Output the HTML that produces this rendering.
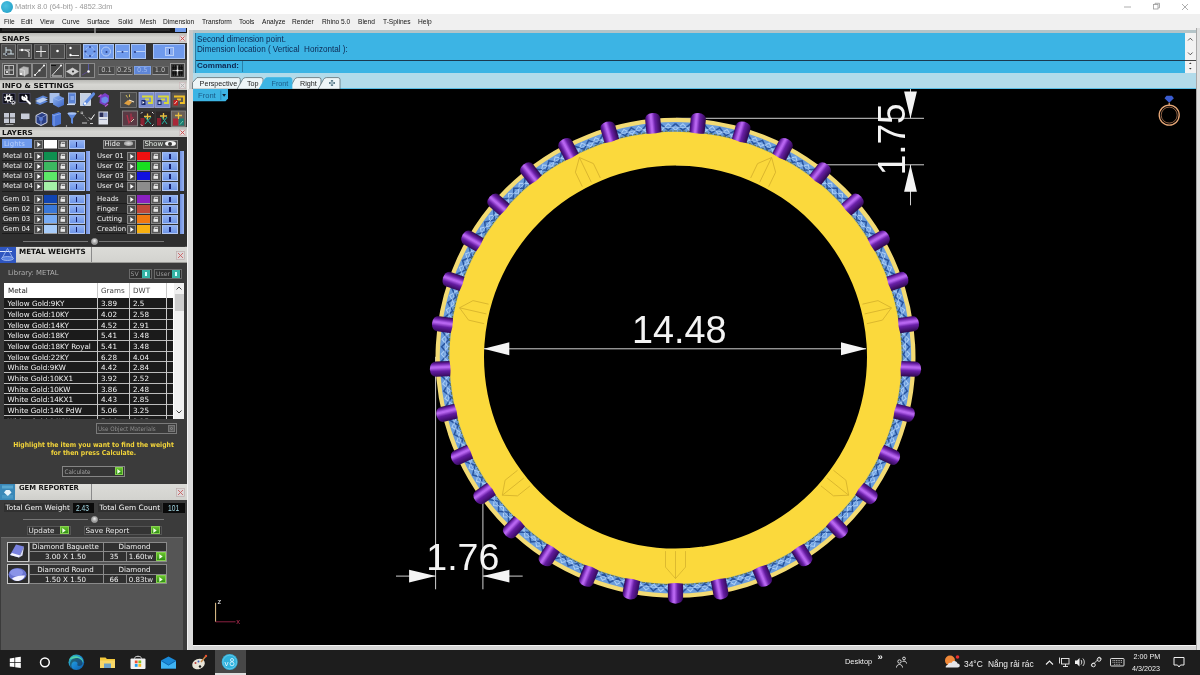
<!DOCTYPE html><html><head><meta charset="utf-8"><title>Matrix 8.0 (64-bit) - 4852.3dm</title><style>
*{box-sizing:border-box;margin:0;padding:0}
html,body{width:1200px;height:675px;overflow:hidden;background:#000}
body{font-family:"Liberation Sans",sans-serif;position:relative}
.a{position:absolute}
.t{position:absolute;white-space:nowrap;line-height:1}
.dv{font-family:"DejaVu Sans","Liberation Sans",sans-serif}
.dc{font-family:"DejaVu Sans Condensed","DejaVu Sans","Liberation Sans",sans-serif}
.hdr{position:absolute;left:0;width:187px;background:linear-gradient(#b9b9b5,#d6d6d2 45%,#cfcfcb);}
  .hdr b{position:absolute;left:2.2px;top:2.6px;transform:scaleX(1.06);transform-origin:0 0;font:bold 6.9px "DejaVu Sans","Liberation Sans",sans-serif;color:#111;white-space:nowrap;line-height:1;letter-spacing:0px}
.x{position:absolute;width:9px;height:8px;border:1px solid #c9a0a0;background:#ddd;}
.sb{position:absolute;background:#4b4b4b;border:1px solid #7c7c7c;border-top-color:#686868;border-left-color:#686868}
.sbb{position:absolute;background:#6f9aec;border:1px solid #a9c4f4;}
</style></head><body><div id="root" style="position:absolute;left:0;top:0;width:1200px;height:675px;will-change:transform">
<div class="a" style="left:0px;top:0px;width:1200px;height:14px;background:#ffffff;"></div>
<div class="a" style="left:0px;top:14px;width:1200px;height:15.5px;background:#f0f0f0;"></div>
<div class="a" style="left:1px;top:1px;width:12px;height:12px;border-radius:50%;background:radial-gradient(circle at 40% 40%,#4cc0e0,#1d9cc4)"></div>
<div class="t" style="left:15px;top:3.3px;font-size:7.4px;color:#9a9a9a;">Matrix 8.0 (64-bit) - 4852.3dm</div>
<div class="t" style="left:4px;top:17.6px;font-size:7.6px;color:#111;transform:scaleX(.87);transform-origin:0 0">File</div>
<div class="t" style="left:21px;top:17.6px;font-size:7.6px;color:#111;transform:scaleX(.87);transform-origin:0 0">Edit</div>
<div class="t" style="left:40px;top:17.6px;font-size:7.6px;color:#111;transform:scaleX(.87);transform-origin:0 0">View</div>
<div class="t" style="left:62px;top:17.6px;font-size:7.6px;color:#111;transform:scaleX(.87);transform-origin:0 0">Curve</div>
<div class="t" style="left:87px;top:17.6px;font-size:7.6px;color:#111;transform:scaleX(.87);transform-origin:0 0">Surface</div>
<div class="t" style="left:118px;top:17.6px;font-size:7.6px;color:#111;transform:scaleX(.87);transform-origin:0 0">Solid</div>
<div class="t" style="left:140px;top:17.6px;font-size:7.6px;color:#111;transform:scaleX(.87);transform-origin:0 0">Mesh</div>
<div class="t" style="left:163px;top:17.6px;font-size:7.6px;color:#111;transform:scaleX(.87);transform-origin:0 0">Dimension</div>
<div class="t" style="left:202px;top:17.6px;font-size:7.6px;color:#111;transform:scaleX(.87);transform-origin:0 0">Transform</div>
<div class="t" style="left:239px;top:17.6px;font-size:7.6px;color:#111;transform:scaleX(.87);transform-origin:0 0">Tools</div>
<div class="t" style="left:262px;top:17.6px;font-size:7.6px;color:#111;transform:scaleX(.87);transform-origin:0 0">Analyze</div>
<div class="t" style="left:292px;top:17.6px;font-size:7.6px;color:#111;transform:scaleX(.87);transform-origin:0 0">Render</div>
<div class="t" style="left:322px;top:17.6px;font-size:7.6px;color:#111;transform:scaleX(.87);transform-origin:0 0">Rhino 5.0</div>
<div class="t" style="left:358px;top:17.6px;font-size:7.6px;color:#111;transform:scaleX(.87);transform-origin:0 0">Blend</div>
<div class="t" style="left:383px;top:17.6px;font-size:7.6px;color:#111;transform:scaleX(.87);transform-origin:0 0">T-Splines</div>
<div class="t" style="left:418px;top:17.6px;font-size:7.6px;color:#111;transform:scaleX(.87);transform-origin:0 0">Help</div>
<svg class="a" style="left:1110px;top:0" width="90" height="14" viewBox="0 0 90 14"><g stroke="#999" stroke-width="0.8" fill="none"><path d="M14 7h7"/><rect x="43.5" y="4.5" width="4.5" height="4.5"/><path d="M45 4.5v-1.2h4.5v4.5h-1.3"/><path d="M72 4l6 6M78 4l-6 6"/></g></svg>
<div class="a" style="left:0px;top:28px;width:187px;height:622px;background:#3b3b3b;"></div>
<div class="a" style="left:187px;top:28px;width:6px;height:622px;background:#c8caca;"></div>
<div class="a" style="left:187.3px;top:28px;width:2.2px;height:622px;background:#f2f2f2;"></div>
<div class="a" style="left:185px;top:28px;width:2px;height:622px;background:#555;"></div>
<div class="a" style="left:0px;top:28px;width:187px;height:5px;background:#151515;"></div>
<div class="a" style="left:2px;top:28px;width:92px;height:3px;background:#2a2a2a;"></div>
<div class="a" style="left:96px;top:28px;width:74px;height:3px;background:#2a2a2a;"></div>
<div class="a" style="left:175px;top:28px;width:10.5px;height:4px;background:#6f9aec;"></div>
<div class="a" style="left:94px;top:28px;width:2px;height:5px;background:#777;"></div>
<div class="hdr" style="top:33px;height:10px"><b>SNAPS</b></div>
<svg class="a" style="left:179px;top:34.8px" width="7" height="7" viewBox="0 0 7 7"><rect x="0.300" y="0.300" width="6.400" height="6.400" fill="#e2dede" stroke="#c8b4b4" stroke-width="0.600"/><path d="M1.500 1.500l4 4M5.500 1.500l-4 4" stroke="#d04040" stroke-width="0.900" /></svg>
<div class="a" style="left:0px;top:43px;width:187px;height:17px;background:#333;"></div>
<div class="a" style="left:0px;top:60px;width:187px;height:20px;background:#5a5a5a;"></div>
<div class="sb" style="left:1px;top:44px;width:15px;height:15px"></div>
<div class="sb" style="left:17px;top:44px;width:15px;height:15px"></div>
<div class="sb" style="left:33.5px;top:44px;width:15px;height:15px"></div>
<div class="sb" style="left:50px;top:44px;width:15px;height:15px"></div>
<div class="sb" style="left:66px;top:44px;width:15px;height:15px"></div>
<div class="sbb" style="left:82.5px;top:44px;width:15px;height:15px"></div>
<div class="sbb" style="left:98.5px;top:44px;width:15px;height:15px"></div>
<div class="sbb" style="left:115px;top:44px;width:15px;height:15px"></div>
<div class="sbb" style="left:131px;top:44px;width:15px;height:15px"></div>
<div class="sbb" style="left:153px;top:44px;width:32px;height:15px"></div>
<div class="a" style="left:165px;top:47px;width:9px;height:9px;border:1px solid #b8cef6;background:#86aaf0"></div>
<div class="a" style="left:169px;top:49px;width:1.4px;height:5px;background:#1a2a6a;"></div>
<svg class="a" style="left:0;top:43px" width="187" height="17" viewBox="0 43 187 17" fill="none" stroke="#e8e8e8" stroke-width="1">
<path d="M3 54h11M6 47v9M6 50h5v4" stroke="#cfe0e8"/><circle cx="6.5" cy="54" r="1" fill="#223" stroke="none"/>
<path d="M19 50h6l4 2v5M25 50h5"/><circle cx="22" cy="50" r="1.2" fill="#fff" stroke="none"/>
<path d="M36 51.500h10M41 46v11"/>
<circle cx="57.500" cy="51" r="1.300" fill="#fff" stroke="none"/>
<path d="M70 55.500h9"/><circle cx="70.500" cy="48" r="1.200" fill="#fff" stroke="none"/><circle cx="70.500" cy="55" r="1.200" fill="#fff" stroke="none"/>
<circle cx="90" cy="51.500" r="4.500" stroke="#b9d0f8" stroke-dasharray="2 1.200"/><g fill="#2a3f8a" stroke="none"><circle cx="90" cy="47" r="1"/><circle cx="90" cy="56" r="1"/><circle cx="85.500" cy="51.500" r="1"/><circle cx="94.500" cy="51.500" r="1"/></g>
<circle cx="106" cy="51.500" r="4.500" stroke="#b9d0f8"/><circle cx="106.500" cy="52" r="1" fill="#2a3f8a" stroke="none"/>
<path d="M117 51.500h11" stroke="#b9d0f8"/><circle cx="122.500" cy="52" r="1" fill="#2a3f8a" stroke="none"/>
<path d="M135 51.500h10" stroke="#b9d0f8"/><circle cx="135" cy="52" r="1.100" fill="#2a3f8a" stroke="none"/>
</svg>
<div class="sb" style="left:2px;top:62.5px;width:14.5px;height:15px;background:#4a4a4a;border-color:#8a8a8a"></div>
<div class="sb" style="left:17px;top:62.5px;width:14.5px;height:15px;background:#4a4a4a;border-color:#8a8a8a"></div>
<div class="sb" style="left:32px;top:62.5px;width:14.5px;height:15px;background:#4a4a4a;border-color:#8a8a8a"></div>
<div class="sb" style="left:49.5px;top:62.5px;width:14.5px;height:15px;background:#4a4a4a;border-color:#8a8a8a"></div>
<div class="sb" style="left:65px;top:62.5px;width:14.5px;height:15px;background:#4a4a4a;border-color:#8a8a8a"></div>
<div class="sb" style="left:80px;top:62.5px;width:14.5px;height:15px;background:#4a4a4a;border-color:#8a8a8a"></div>
<svg class="a" style="left:0;top:60px" width="187" height="20" viewBox="0 60 187 20" fill="none" stroke="#e0e0e0" stroke-width="1">
<rect x="4.500" y="65.500" width="9" height="9" stroke="#bbb"/><path d="M4.500 70h9M9 65.500v9" stroke="#bbb"/><circle cx="7" cy="72" r="1" fill="#fff" stroke="none"/>
<path d="M19.500 69l4-2.500 5 1v6l-4 2.500-5-1.500z" fill="#b8b8b8" stroke="#999" stroke-width="0.500"/><path d="M19.500 69l5 1.500v6" stroke="#eee" stroke-width="0.500"/><circle cx="21" cy="74" r="1.100" fill="#fff" stroke="none"/>
<path d="M35 75l9-9.500"/><circle cx="35" cy="75" r="1" fill="#fff" stroke="none"/><circle cx="39.500" cy="70.500" r="1.100" fill="#fff" stroke="none"/><circle cx="44" cy="65.500" r="1" fill="#fff" stroke="none"/>
<path d="M52 75.500l9-10M52 76h10" stroke="#ddd"/><path d="M51 65.500h5" stroke="#111"/><circle cx="61" cy="65.500" r="1" fill="#fff" stroke="none"/>
<path d="M66.500 71.500l6-3.500 6 3.500-6 3.500z" fill="#cfcfcf" stroke="#eee" stroke-width="0.500"/><circle cx="73" cy="71.500" r="1.100" fill="#333" stroke="none"/>
<path d="M88.500 64v8" stroke="#5a5aa8"/><path d="M82 75l7-4" stroke="#5a4a8a"/><circle cx="88.500" cy="71.500" r="1.300" fill="#fff" stroke="none"/>
</svg>
<div class="a dv" style="left:98px;top:66px;width:17px;height:9px;background:#474747;border:1px solid #6a6a6a;border-bottom-color:#999;color:#bdbdbd;font-size:6.6px;line-height:7.5px;text-align:center">0.1</div>
<div class="a dv" style="left:115.5px;top:66px;width:17.5px;height:9px;background:#474747;border:1px solid #6a6a6a;border-bottom-color:#999;color:#bdbdbd;font-size:6.6px;line-height:7.5px;text-align:center">0.25</div>
<div class="a dv" style="left:133.5px;top:66px;width:17.5px;height:9px;background:#5f86d6;border:1px solid #7ea2e8;border-bottom-color:#999;color:#9fb8ec;font-size:6.6px;line-height:7.5px;text-align:center">0.5</div>
<div class="a dv" style="left:151.5px;top:66px;width:17px;height:9px;background:#474747;border:1px solid #6a6a6a;border-bottom-color:#999;color:#bdbdbd;font-size:6.6px;line-height:7.5px;text-align:center">1.0</div>
<div class="sb" style="left:169.5px;top:62.5px;width:15.5px;height:15.5px;background:#3a3a3a;border-color:#9a9a9a"></div>
<svg class="a" style="left:170px;top:63px" width="15" height="15" viewBox="0 0 15 15" stroke="#0c0c0c" stroke-width="0.900" fill="none"><path d="M2 4.300h4.500M8.500 4.300h4.500M2 10.800h4.500M8.500 10.800h4.500M3.300 2v4.500M5.400 2v4.500M9.600 2v4.500M11.700 2v4.500M3.300 8.500v4.500M5.400 8.500v4.500M9.600 8.500v4.500M11.700 8.500v4.500M2 6h4.500M8.500 6h4.500M2 9.200h4.500M8.500 9.200h4.500" /><path d="M2.500 7.500h10M7.500 2.500v10" stroke="#cfcfcf" stroke-width="0.700"/><circle cx="7.500" cy="7.500" r="1.100" fill="#fff" stroke="none"/></svg>
<div class="hdr" style="top:80px;height:10px"><b>INFO &amp; SETTINGS</b></div>
<svg class="a" style="left:179px;top:81.8px" width="7" height="7" viewBox="0 0 7 7"><rect x="0.300" y="0.300" width="6.400" height="6.400" fill="#e2dede" stroke="#c8b4b4" stroke-width="0.600"/><path d="M1.500 1.500l4 4M5.500 1.500l-4 4" stroke="#b0b0b0" stroke-width="0.900" /></svg>
<div class="a" style="left:0px;top:90px;width:187px;height:37px;background:#363636;"></div>
<svg class="a" style="left:0;top:90px" width="187" height="37" viewBox="0 90 187 37">
<defs><linearGradient id="bl" x1="0" y1="0" x2="1" y2="1"><stop offset="0" stop-color="#8fb4f0"/><stop offset="1" stop-color="#3b63c4"/></linearGradient></defs>
<rect x="3" y="93.500" width="12" height="10" fill="#0a0a14" stroke="#55557a" stroke-width="0.600"/>
<circle cx="8.500" cy="98.300" r="2.300" fill="none" stroke="#fff" stroke-width="1.500"/><circle cx="8.500" cy="98.300" r="3.700" fill="none" stroke="#fff" stroke-width="1.300" stroke-dasharray="1.450 1.450"/><circle cx="13.300" cy="102.600" r="1.200" fill="none" stroke="#fff" stroke-width="0.900"/><circle cx="13.300" cy="102.600" r="2" fill="none" stroke="#fff" stroke-width="0.800" stroke-dasharray="0.800 0.770"/>
<rect x="19" y="93.500" width="11" height="9" fill="#0a0a14" stroke="#55557a" stroke-width="0.600"/>
<path d="M24 97.500l6 6" stroke="#fff" stroke-width="2" stroke-linecap="round"/><circle cx="24.500" cy="97.500" r="2.300" fill="none" stroke="#fff" stroke-width="1.700" stroke-dasharray="7.900 2.400 4.200 0"/>
<path d="M35 99l8-3.500 5 2-8 3.500zM35 103l8-3.500 5 2-8 3.500z" fill="#5c86d8"/><path d="M35 101l8-3.500 5 2-8 3.500z" fill="#b9cdf2"/>
<rect x="49.500" y="93" width="10" height="10" fill="#a9c0ea"/><path d="M53 98l6-2.500 5 2.500v7l-5.500 2.500-5.500-3z" fill="url(#bl)"/><path d="M53 98l5.500 2.500 5.500-2.500" fill="none" stroke="#9fbcf2" stroke-width="0.600"/>
<rect x="68.500" y="93" width="7" height="10.500" fill="#5a82d4" stroke="#a8c0ee" stroke-width="0.800"/><path d="M67 104.500h8" stroke="#c8d8f4" stroke-width="1.200"/><rect x="70.500" y="96" width="3.500" height="4" fill="#88a8e8"/>
<rect x="80.500" y="93.500" width="10" height="12" fill="#c4d0e4" stroke="#e0e6f0" stroke-width="0.800"/><path d="M84.500 104l9-10" stroke="#5f8ce0" stroke-width="3.200" stroke-linecap="round"/><circle cx="85" cy="103.500" r="1.200" fill="#fff"/>
<path d="M100 96l5-3 4 2.500v6l-4.500 4-5-2.500z" fill="#7a3fc8"/><path d="M101.500 98l4-1.500 2.500 1.500v3.500l-3 2-3.500-1.500z" fill="#6a8ae8"/><path d="M98.500 97l3-2.500M108 104l-3 2.500" stroke="#c05ad8" stroke-width="1.400"/>
<rect x="120.500" y="92.500" width="16" height="15" fill="#4a4a4a" stroke="#7a7a7a" stroke-width="0.800"/>
<path d="M124 103.500l4-3.500 4 2-3 3.500z" fill="#e0a040"/><path d="M129 100l5 2" stroke="#f4e0c0" stroke-width="1.300"/><path d="M126 95l1.500 2.500M129.500 94.500v2.500" stroke="#e8d060" stroke-width="0.900"/>
<rect x="139" y="92.500" width="15" height="15" fill="#7a8acc" stroke="#a8b4e4" stroke-width="0.800"/><rect x="155" y="92.500" width="15" height="15" fill="#7a8acc" stroke="#a8b4e4" stroke-width="0.800"/>
<path d="M142 96.500h10v6.500h-4M145 99.500h4" fill="none" stroke="#d8d838" stroke-width="1.800"/><rect x="141.500" y="100" width="4" height="5" fill="#1a2a6a"/><path d="M142.500 101l2 1.500-2 1.500z" fill="#fff"/>
<path d="M158 96.500h10v6.500h-4M161 99.500h4" fill="none" stroke="#d8d838" stroke-width="1.800"/><rect x="157.500" y="100" width="4" height="5" fill="#1a2a6a"/><rect x="158.500" y="101.500" width="2" height="2.500" fill="#c8d0e8"/>
<rect x="171.500" y="92.500" width="14" height="15" fill="#585450"/>
<path d="M174 96.500h10v6.500h-4M177 99.500h4" fill="none" stroke="#f0c028" stroke-width="1.800"/><rect x="173.500" y="100" width="4.500" height="5.500" fill="#c02020"/><path d="M174.500 104l2.500-3" stroke="#fff" stroke-width="0.800"/>
<g fill="#c4c8d4"><rect x="4" y="113" width="5" height="4.500"/><rect x="10" y="113" width="5" height="4.500"/><rect x="4" y="118.500" width="5" height="4.500"/><rect x="10" y="118.500" width="5" height="4.500"/><rect x="5.500" y="124" width="8" height="1" fill="#999"/></g>
<rect x="21" y="113.500" width="8.500" height="5.500" fill="#c8ccd8"/><rect x="23" y="119" width="4.500" height="1" fill="#555"/>
<path d="M36 115.500l6-3 5 2v8l-6 3-5-2.500z" fill="#2a3f86" stroke="#e4e8f4" stroke-width="0.900"/><path d="M36 115.500l5 2.500v7.500M41 118l6-3.500" fill="none" stroke="#aebde6" stroke-width="0.600"/><circle cx="41" cy="119" r="2" fill="#5a7ad0"/>
<path d="M52 114.500l7-2.500 2 1.500v10.500l-7 2.500-2-1.500z" fill="#4a74d4"/><path d="M52 114.500l2 1v11M54 115.500l7-2" fill="none" stroke="#9cb8f0" stroke-width="0.700"/>
<path d="M67.500 113.500h9l-3.500 5v5.500l-2 -1v-4.500z" fill="#5d88dc"/><ellipse cx="72" cy="113.500" rx="4.500" ry="1.200" fill="#a8c4f4"/><circle cx="66.500" cy="126" r="0.700" fill="#ccc"/>
<path d="M82 113.500l7 8" stroke="#ddd" stroke-width="0.600" stroke-dasharray="1.200 1"/><path d="M89 117.500l2 2 3.500-5" fill="none" stroke="#fff" stroke-width="1"/><path d="M82 123h5M90 123.500h3" stroke="#ddd" stroke-width="0.900"/><rect x="81" y="112" width="1.800" height="1.800" fill="none" stroke="#ddd" stroke-width="0.500"/><circle cx="78" cy="111.500" r="0.700" fill="#e8e070"/>
<rect x="98.500" y="111.500" width="9.500" height="13" fill="#dfe3ec"/><rect x="99.500" y="112.500" width="4" height="4.500" fill="#2a2f5a"/><rect x="104" y="112.500" width="3.500" height="4.500" fill="#8a98c8"/><rect x="99.500" y="119" width="7.500" height="1" fill="#9aa4c0"/>
<rect x="122.500" y="111" width="15" height="15" fill="#5a3a44" stroke="#8a8a8a" stroke-width="0.900"/><path d="M127 115l2 8 4-6M131 113.500v6" fill="none" stroke="#b03048" stroke-width="1.300"/><path d="M131 122l3-3" stroke="#d8c8b0" stroke-width="1"/>
<rect x="139.500" y="111.500" width="15" height="15" fill="#2e2828"/><path d="M144 116.500h7M147.500 113.500v6.500" stroke="#e8c040" stroke-width="1.300"/><path d="M145 117l6 7M151 117l-6 7" stroke="#28b0a0" stroke-width="1"/><rect x="140.500" y="118" width="4" height="7.500" fill="#8a2030"/><path d="M141 113.500l1.500-1.500M153.500 113.500l-1.500-1.500M141 124.500l1.500 1.500M153.500 124.500l-1.500 1.500" stroke="#fff" stroke-width="0.900"/>
<rect x="156" y="111.500" width="14" height="15" fill="#2e2828"/><path d="M160 116h7M163.500 113v6.500" stroke="#e8c040" stroke-width="1.300"/><path d="M162 117l5 7M167 117l-5 7" stroke="#28b0a0" stroke-width="1"/><rect x="157" y="118" width="4" height="7.500" fill="#8a2030"/>
<rect x="171.500" y="111" width="14" height="15.500" fill="#6a6058" stroke="#8a8a8a" stroke-width="0.800"/><path d="M175 115.500h7M178.500 112.500v6.500" stroke="#e8c040" stroke-width="1.300"/><rect x="173" y="118.500" width="5" height="7" fill="#a82838"/><rect x="179" y="118.500" width="5" height="7" fill="#1a7a70"/><path d="M180 124.500l3-3.500" stroke="#7ad0b0" stroke-width="0.900"/>
</svg>
<div class="hdr" style="top:127px;height:10px"><b>LAYERS</b></div>
<svg class="a" style="left:179px;top:128.8px" width="7" height="7" viewBox="0 0 7 7"><rect x="0.300" y="0.300" width="6.400" height="6.400" fill="#e2dede" stroke="#c8b4b4" stroke-width="0.600"/><path d="M1.500 1.500l4 4M5.500 1.500l-4 4" stroke="#d04040" stroke-width="0.900" /></svg>
<div class="a" style="left:0px;top:137px;width:187px;height:109px;background:#2f2f2f;"></div>
<div class="a" style="left:2px;top:139.2px;width:30px;height:8.5px;background:#6f9aec;"></div>
<div class="t dv" style="left:4px;top:140.79999999999998px;font-size:6.9px;color:#b9d0fa;">Lights</div>
<div class="a" style="left:34px;top:139.7px;width:9px;height:9px;background:#4c4c4c;border:1px solid #858585"></div>
<svg class="a" style="left:37px;top:141.7px" width="4" height="5" viewBox="0 0 4 5"><path d="M0.300 0l3.400 2.500-3.400 2.500z" fill="#fff"/></svg>
<div class="a" style="left:43.5px;top:139.7px;width:13.5px;height:9px;background:#ffffff;border-bottom:1px solid #999"></div>
<div class="a" style="left:57.5px;top:139.7px;width:10px;height:9px;background:#585858;border:1px solid #858585"></div>
<svg class="a" style="left:59.5px;top:141.2px" width="6" height="6" viewBox="0 0 6 6"><rect x="0.500" y="2.800" width="4.500" height="3" fill="#e8e8e8"/><path d="M1.500 2.800v-1.500h3v1" fill="none" stroke="#e8e8e8" stroke-width="0.900"/></svg>
<div class="a" style="left:68.5px;top:139.7px;width:16.5px;height:9px;background:linear-gradient(#8fb0f2,#6f96e8);border:1px solid #b4c8f4;border-top-color:#9ab6f0"></div>
<div class="a" style="left:76px;top:141.7px;width:1.3px;height:5px;background:#152070;"></div>
<div class="a" style="left:102.500px;top:139.700px;width:33.500px;height:9px;background:#474747;border:1px solid #8a8a8a"></div>
<div class="t dv" style="left:104.5px;top:141.4px;font-size:6.9px;color:#f0f0f0;">Hide</div>
<div class="a" style="left:123.500px;top:141.300px;width:9.500px;height:4.500px;border-radius:50%;background:radial-gradient(#d8d8d8,#8a8a8a)"></div>
<div class="a" style="left:142.500px;top:139.700px;width:35.500px;height:9px;background:#474747;border:1px solid #8a8a8a"></div>
<div class="t dv" style="left:144.5px;top:141.4px;font-size:6.9px;color:#e8f0e8;">Show</div>
<div class="a" style="left:165px;top:141.300px;width:10.500px;height:5px;border-radius:50%;background:#f4f4f4"></div>
<div class="a" style="left:168.200px;top:141.800px;width:4.200px;height:4.200px;border-radius:50%;background:#333"></div>
<div class="t dv" style="left:3px;top:153.0px;font-size:6.9px;color:#f2f2f2;">Metal 01</div>
<div class="a" style="left:2px;top:160.4px;width:31px;height:1px;background:#1c1c1c;"></div>
<div class="a" style="left:34px;top:151.8px;width:9px;height:9px;background:#4c4c4c;border:1px solid #858585"></div>
<svg class="a" style="left:37px;top:153.8px" width="4" height="5" viewBox="0 0 4 5"><path d="M0.300 0l3.400 2.500-3.400 2.500z" fill="#fff"/></svg>
<div class="a" style="left:43.5px;top:151.8px;width:13.5px;height:9px;background:#0f9050;border-bottom:1px solid #999"></div>
<div class="a" style="left:57.5px;top:151.8px;width:10px;height:9px;background:#585858;border:1px solid #858585"></div>
<svg class="a" style="left:59.5px;top:153.3px" width="6" height="6" viewBox="0 0 6 6"><rect x="0.500" y="2.800" width="4.500" height="3" fill="#e8e8e8"/><path d="M1.500 2.800v-1.500h3v1" fill="none" stroke="#e8e8e8" stroke-width="0.900"/></svg>
<div class="a" style="left:68.5px;top:151.8px;width:16.5px;height:9px;background:linear-gradient(#8fb0f2,#6f96e8);border:1px solid #b4c8f4;border-top-color:#9ab6f0"></div>
<div class="a" style="left:76px;top:153.8px;width:1.3px;height:5px;background:#152070;"></div>
<div class="t dv" style="left:97px;top:153.0px;font-size:6.9px;color:#f2f2f2;">User 01</div>
<div class="a" style="left:96px;top:160.4px;width:31px;height:1px;background:#1c1c1c;"></div>
<div class="a" style="left:127.3px;top:151.8px;width:9px;height:9px;background:#4c4c4c;border:1px solid #858585"></div>
<svg class="a" style="left:130.3px;top:153.8px" width="4" height="5" viewBox="0 0 4 5"><path d="M0.300 0l3.400 2.500-3.400 2.500z" fill="#fff"/></svg>
<div class="a" style="left:136.8px;top:151.8px;width:13.5px;height:9px;background:#f01010;border-bottom:1px solid #999"></div>
<div class="a" style="left:150.8px;top:151.8px;width:10px;height:9px;background:#585858;border:1px solid #858585"></div>
<svg class="a" style="left:152.8px;top:153.3px" width="6" height="6" viewBox="0 0 6 6"><rect x="0.500" y="2.800" width="4.500" height="3" fill="#e8e8e8"/><path d="M1.500 2.800v-1.500h3v1" fill="none" stroke="#e8e8e8" stroke-width="0.900"/></svg>
<div class="a" style="left:161.8px;top:151.8px;width:16.5px;height:9px;background:linear-gradient(#8fb0f2,#6f96e8);border:1px solid #b4c8f4;border-top-color:#9ab6f0"></div>
<div class="a" style="left:169.3px;top:153.8px;width:1.3px;height:5px;background:#152070;"></div>
<div class="t dv" style="left:3px;top:163.05px;font-size:6.9px;color:#f2f2f2;">Metal 02</div>
<div class="a" style="left:2px;top:170.45000000000002px;width:31px;height:1px;background:#1c1c1c;"></div>
<div class="a" style="left:34px;top:161.85000000000002px;width:9px;height:9px;background:#4c4c4c;border:1px solid #858585"></div>
<svg class="a" style="left:37px;top:163.85000000000002px" width="4" height="5" viewBox="0 0 4 5"><path d="M0.300 0l3.400 2.500-3.400 2.500z" fill="#fff"/></svg>
<div class="a" style="left:43.5px;top:161.85000000000002px;width:13.5px;height:9px;background:#3cb860;border-bottom:1px solid #999"></div>
<div class="a" style="left:57.5px;top:161.85000000000002px;width:10px;height:9px;background:#585858;border:1px solid #858585"></div>
<svg class="a" style="left:59.5px;top:163.35000000000002px" width="6" height="6" viewBox="0 0 6 6"><rect x="0.500" y="2.800" width="4.500" height="3" fill="#e8e8e8"/><path d="M1.500 2.800v-1.500h3v1" fill="none" stroke="#e8e8e8" stroke-width="0.900"/></svg>
<div class="a" style="left:68.5px;top:161.85000000000002px;width:16.5px;height:9px;background:linear-gradient(#8fb0f2,#6f96e8);border:1px solid #b4c8f4;border-top-color:#9ab6f0"></div>
<div class="a" style="left:76px;top:163.85000000000002px;width:1.3px;height:5px;background:#152070;"></div>
<div class="t dv" style="left:97px;top:163.05px;font-size:6.9px;color:#f2f2f2;">User 02</div>
<div class="a" style="left:96px;top:170.45000000000002px;width:31px;height:1px;background:#1c1c1c;"></div>
<div class="a" style="left:127.3px;top:161.85000000000002px;width:9px;height:9px;background:#4c4c4c;border:1px solid #858585"></div>
<svg class="a" style="left:130.3px;top:163.85000000000002px" width="4" height="5" viewBox="0 0 4 5"><path d="M0.300 0l3.400 2.500-3.400 2.500z" fill="#fff"/></svg>
<div class="a" style="left:136.8px;top:161.85000000000002px;width:13.5px;height:9px;background:#18e020;border-bottom:1px solid #999"></div>
<div class="a" style="left:150.8px;top:161.85000000000002px;width:10px;height:9px;background:#585858;border:1px solid #858585"></div>
<svg class="a" style="left:152.8px;top:163.35000000000002px" width="6" height="6" viewBox="0 0 6 6"><rect x="0.500" y="2.800" width="4.500" height="3" fill="#e8e8e8"/><path d="M1.500 2.800v-1.500h3v1" fill="none" stroke="#e8e8e8" stroke-width="0.900"/></svg>
<div class="a" style="left:161.8px;top:161.85000000000002px;width:16.5px;height:9px;background:linear-gradient(#8fb0f2,#6f96e8);border:1px solid #b4c8f4;border-top-color:#9ab6f0"></div>
<div class="a" style="left:169.3px;top:163.85000000000002px;width:1.3px;height:5px;background:#152070;"></div>
<div class="t dv" style="left:3px;top:173.1px;font-size:6.9px;color:#f2f2f2;">Metal 03</div>
<div class="a" style="left:2px;top:180.5px;width:31px;height:1px;background:#1c1c1c;"></div>
<div class="a" style="left:34px;top:171.9px;width:9px;height:9px;background:#4c4c4c;border:1px solid #858585"></div>
<svg class="a" style="left:37px;top:173.9px" width="4" height="5" viewBox="0 0 4 5"><path d="M0.300 0l3.400 2.500-3.400 2.500z" fill="#fff"/></svg>
<div class="a" style="left:43.5px;top:171.9px;width:13.5px;height:9px;background:#5ce868;border-bottom:1px solid #999"></div>
<div class="a" style="left:57.5px;top:171.9px;width:10px;height:9px;background:#585858;border:1px solid #858585"></div>
<svg class="a" style="left:59.5px;top:173.4px" width="6" height="6" viewBox="0 0 6 6"><rect x="0.500" y="2.800" width="4.500" height="3" fill="#e8e8e8"/><path d="M1.500 2.800v-1.500h3v1" fill="none" stroke="#e8e8e8" stroke-width="0.900"/></svg>
<div class="a" style="left:68.5px;top:171.9px;width:16.5px;height:9px;background:linear-gradient(#8fb0f2,#6f96e8);border:1px solid #b4c8f4;border-top-color:#9ab6f0"></div>
<div class="a" style="left:76px;top:173.9px;width:1.3px;height:5px;background:#152070;"></div>
<div class="t dv" style="left:97px;top:173.1px;font-size:6.9px;color:#f2f2f2;">User 03</div>
<div class="a" style="left:96px;top:180.5px;width:31px;height:1px;background:#1c1c1c;"></div>
<div class="a" style="left:127.3px;top:171.9px;width:9px;height:9px;background:#4c4c4c;border:1px solid #858585"></div>
<svg class="a" style="left:130.3px;top:173.9px" width="4" height="5" viewBox="0 0 4 5"><path d="M0.300 0l3.400 2.500-3.400 2.500z" fill="#fff"/></svg>
<div class="a" style="left:136.8px;top:171.9px;width:13.5px;height:9px;background:#1010e0;border-bottom:1px solid #999"></div>
<div class="a" style="left:150.8px;top:171.9px;width:10px;height:9px;background:#585858;border:1px solid #858585"></div>
<svg class="a" style="left:152.8px;top:173.4px" width="6" height="6" viewBox="0 0 6 6"><rect x="0.500" y="2.800" width="4.500" height="3" fill="#e8e8e8"/><path d="M1.500 2.800v-1.500h3v1" fill="none" stroke="#e8e8e8" stroke-width="0.900"/></svg>
<div class="a" style="left:161.8px;top:171.9px;width:16.5px;height:9px;background:linear-gradient(#8fb0f2,#6f96e8);border:1px solid #b4c8f4;border-top-color:#9ab6f0"></div>
<div class="a" style="left:169.3px;top:173.9px;width:1.3px;height:5px;background:#152070;"></div>
<div class="t dv" style="left:3px;top:183.15px;font-size:6.9px;color:#f2f2f2;">Metal 04</div>
<div class="a" style="left:2px;top:190.55px;width:31px;height:1px;background:#1c1c1c;"></div>
<div class="a" style="left:34px;top:181.95000000000002px;width:9px;height:9px;background:#4c4c4c;border:1px solid #858585"></div>
<svg class="a" style="left:37px;top:183.95000000000002px" width="4" height="5" viewBox="0 0 4 5"><path d="M0.300 0l3.400 2.500-3.400 2.500z" fill="#fff"/></svg>
<div class="a" style="left:43.5px;top:181.95000000000002px;width:13.5px;height:9px;background:#a4f0a8;border-bottom:1px solid #999"></div>
<div class="a" style="left:57.5px;top:181.95000000000002px;width:10px;height:9px;background:#585858;border:1px solid #858585"></div>
<svg class="a" style="left:59.5px;top:183.45000000000002px" width="6" height="6" viewBox="0 0 6 6"><rect x="0.500" y="2.800" width="4.500" height="3" fill="#e8e8e8"/><path d="M1.500 2.800v-1.500h3v1" fill="none" stroke="#e8e8e8" stroke-width="0.900"/></svg>
<div class="a" style="left:68.5px;top:181.95000000000002px;width:16.5px;height:9px;background:linear-gradient(#8fb0f2,#6f96e8);border:1px solid #b4c8f4;border-top-color:#9ab6f0"></div>
<div class="a" style="left:76px;top:183.95000000000002px;width:1.3px;height:5px;background:#152070;"></div>
<div class="t dv" style="left:97px;top:183.15px;font-size:6.9px;color:#f2f2f2;">User 04</div>
<div class="a" style="left:96px;top:190.55px;width:31px;height:1px;background:#1c1c1c;"></div>
<div class="a" style="left:127.3px;top:181.95000000000002px;width:9px;height:9px;background:#4c4c4c;border:1px solid #858585"></div>
<svg class="a" style="left:130.3px;top:183.95000000000002px" width="4" height="5" viewBox="0 0 4 5"><path d="M0.300 0l3.400 2.500-3.400 2.500z" fill="#fff"/></svg>
<div class="a" style="left:136.8px;top:181.95000000000002px;width:13.5px;height:9px;background:#8c8c8c;border-bottom:1px solid #999"></div>
<div class="a" style="left:150.8px;top:181.95000000000002px;width:10px;height:9px;background:#585858;border:1px solid #858585"></div>
<svg class="a" style="left:152.8px;top:183.45000000000002px" width="6" height="6" viewBox="0 0 6 6"><rect x="0.500" y="2.800" width="4.500" height="3" fill="#e8e8e8"/><path d="M1.500 2.800v-1.500h3v1" fill="none" stroke="#e8e8e8" stroke-width="0.900"/></svg>
<div class="a" style="left:161.8px;top:181.95000000000002px;width:16.5px;height:9px;background:linear-gradient(#8fb0f2,#6f96e8);border:1px solid #b4c8f4;border-top-color:#9ab6f0"></div>
<div class="a" style="left:169.3px;top:183.95000000000002px;width:1.3px;height:5px;background:#152070;"></div>
<div class="t dv" style="left:3px;top:195.79999999999998px;font-size:6.9px;color:#f2f2f2;">Gem 01</div>
<div class="a" style="left:2px;top:203.2px;width:31px;height:1px;background:#1c1c1c;"></div>
<div class="a" style="left:34px;top:194.6px;width:9px;height:9px;background:#4c4c4c;border:1px solid #858585"></div>
<svg class="a" style="left:37px;top:196.6px" width="4" height="5" viewBox="0 0 4 5"><path d="M0.300 0l3.400 2.500-3.400 2.500z" fill="#fff"/></svg>
<div class="a" style="left:43.5px;top:194.6px;width:13.5px;height:9px;background:#1044b0;border-bottom:1px solid #999"></div>
<div class="a" style="left:57.5px;top:194.6px;width:10px;height:9px;background:#585858;border:1px solid #858585"></div>
<svg class="a" style="left:59.5px;top:196.1px" width="6" height="6" viewBox="0 0 6 6"><rect x="0.500" y="2.800" width="4.500" height="3" fill="#e8e8e8"/><path d="M1.500 2.800v-1.500h3v1" fill="none" stroke="#e8e8e8" stroke-width="0.900"/></svg>
<div class="a" style="left:68.5px;top:194.6px;width:16.5px;height:9px;background:linear-gradient(#8fb0f2,#6f96e8);border:1px solid #b4c8f4;border-top-color:#9ab6f0"></div>
<div class="a" style="left:76px;top:196.6px;width:1.3px;height:5px;background:#152070;"></div>
<div class="t dv" style="left:97px;top:195.79999999999998px;font-size:6.9px;color:#f2f2f2;">Heads</div>
<div class="a" style="left:96px;top:203.2px;width:31px;height:1px;background:#1c1c1c;"></div>
<div class="a" style="left:127.3px;top:194.6px;width:9px;height:9px;background:#4c4c4c;border:1px solid #858585"></div>
<svg class="a" style="left:130.3px;top:196.6px" width="4" height="5" viewBox="0 0 4 5"><path d="M0.300 0l3.400 2.500-3.400 2.500z" fill="#fff"/></svg>
<div class="a" style="left:136.8px;top:194.6px;width:13.5px;height:9px;background:#8a20c0;border-bottom:1px solid #999"></div>
<div class="a" style="left:150.8px;top:194.6px;width:10px;height:9px;background:#585858;border:1px solid #858585"></div>
<svg class="a" style="left:152.8px;top:196.1px" width="6" height="6" viewBox="0 0 6 6"><rect x="0.500" y="2.800" width="4.500" height="3" fill="#e8e8e8"/><path d="M1.500 2.800v-1.500h3v1" fill="none" stroke="#e8e8e8" stroke-width="0.900"/></svg>
<div class="a" style="left:161.8px;top:194.6px;width:16.5px;height:9px;background:linear-gradient(#8fb0f2,#6f96e8);border:1px solid #b4c8f4;border-top-color:#9ab6f0"></div>
<div class="a" style="left:169.3px;top:196.6px;width:1.3px;height:5px;background:#152070;"></div>
<div class="t dv" style="left:3px;top:205.85px;font-size:6.9px;color:#f2f2f2;">Gem 02</div>
<div class="a" style="left:2px;top:213.25px;width:31px;height:1px;background:#1c1c1c;"></div>
<div class="a" style="left:34px;top:204.65px;width:9px;height:9px;background:#4c4c4c;border:1px solid #858585"></div>
<svg class="a" style="left:37px;top:206.65px" width="4" height="5" viewBox="0 0 4 5"><path d="M0.300 0l3.400 2.500-3.400 2.500z" fill="#fff"/></svg>
<div class="a" style="left:43.5px;top:204.65px;width:13.5px;height:9px;background:#3a78d8;border-bottom:1px solid #999"></div>
<div class="a" style="left:57.5px;top:204.65px;width:10px;height:9px;background:#585858;border:1px solid #858585"></div>
<svg class="a" style="left:59.5px;top:206.15px" width="6" height="6" viewBox="0 0 6 6"><rect x="0.500" y="2.800" width="4.500" height="3" fill="#e8e8e8"/><path d="M1.500 2.800v-1.500h3v1" fill="none" stroke="#e8e8e8" stroke-width="0.900"/></svg>
<div class="a" style="left:68.5px;top:204.65px;width:16.5px;height:9px;background:linear-gradient(#8fb0f2,#6f96e8);border:1px solid #b4c8f4;border-top-color:#9ab6f0"></div>
<div class="a" style="left:76px;top:206.65px;width:1.3px;height:5px;background:#152070;"></div>
<div class="t dv" style="left:97px;top:205.85px;font-size:6.9px;color:#f2f2f2;">Finger</div>
<div class="a" style="left:96px;top:213.25px;width:31px;height:1px;background:#1c1c1c;"></div>
<div class="a" style="left:127.3px;top:204.65px;width:9px;height:9px;background:#4c4c4c;border:1px solid #858585"></div>
<svg class="a" style="left:130.3px;top:206.65px" width="4" height="5" viewBox="0 0 4 5"><path d="M0.300 0l3.400 2.500-3.400 2.500z" fill="#fff"/></svg>
<div class="a" style="left:136.8px;top:204.65px;width:13.5px;height:9px;background:#c04838;border-bottom:1px solid #999"></div>
<div class="a" style="left:150.8px;top:204.65px;width:10px;height:9px;background:#585858;border:1px solid #858585"></div>
<svg class="a" style="left:152.8px;top:206.15px" width="6" height="6" viewBox="0 0 6 6"><rect x="0.500" y="2.800" width="4.500" height="3" fill="#e8e8e8"/><path d="M1.500 2.800v-1.500h3v1" fill="none" stroke="#e8e8e8" stroke-width="0.900"/></svg>
<div class="a" style="left:161.8px;top:204.65px;width:16.5px;height:9px;background:linear-gradient(#8fb0f2,#6f96e8);border:1px solid #b4c8f4;border-top-color:#9ab6f0"></div>
<div class="a" style="left:169.3px;top:206.65px;width:1.3px;height:5px;background:#152070;"></div>
<div class="t dv" style="left:3px;top:215.89999999999998px;font-size:6.9px;color:#f2f2f2;">Gem 03</div>
<div class="a" style="left:2px;top:223.29999999999998px;width:31px;height:1px;background:#1c1c1c;"></div>
<div class="a" style="left:34px;top:214.7px;width:9px;height:9px;background:#4c4c4c;border:1px solid #858585"></div>
<svg class="a" style="left:37px;top:216.7px" width="4" height="5" viewBox="0 0 4 5"><path d="M0.300 0l3.400 2.500-3.400 2.500z" fill="#fff"/></svg>
<div class="a" style="left:43.5px;top:214.7px;width:13.5px;height:9px;background:#78acf4;border-bottom:1px solid #999"></div>
<div class="a" style="left:57.5px;top:214.7px;width:10px;height:9px;background:#585858;border:1px solid #858585"></div>
<svg class="a" style="left:59.5px;top:216.2px" width="6" height="6" viewBox="0 0 6 6"><rect x="0.500" y="2.800" width="4.500" height="3" fill="#e8e8e8"/><path d="M1.500 2.800v-1.500h3v1" fill="none" stroke="#e8e8e8" stroke-width="0.900"/></svg>
<div class="a" style="left:68.5px;top:214.7px;width:16.5px;height:9px;background:linear-gradient(#8fb0f2,#6f96e8);border:1px solid #b4c8f4;border-top-color:#9ab6f0"></div>
<div class="a" style="left:76px;top:216.7px;width:1.3px;height:5px;background:#152070;"></div>
<div class="t dv" style="left:97px;top:215.89999999999998px;font-size:6.9px;color:#f2f2f2;">Cutting</div>
<div class="a" style="left:96px;top:223.29999999999998px;width:31px;height:1px;background:#1c1c1c;"></div>
<div class="a" style="left:127.3px;top:214.7px;width:9px;height:9px;background:#4c4c4c;border:1px solid #858585"></div>
<svg class="a" style="left:130.3px;top:216.7px" width="4" height="5" viewBox="0 0 4 5"><path d="M0.300 0l3.400 2.500-3.400 2.500z" fill="#fff"/></svg>
<div class="a" style="left:136.8px;top:214.7px;width:13.5px;height:9px;background:#f07810;border-bottom:1px solid #999"></div>
<div class="a" style="left:150.8px;top:214.7px;width:10px;height:9px;background:#585858;border:1px solid #858585"></div>
<svg class="a" style="left:152.8px;top:216.2px" width="6" height="6" viewBox="0 0 6 6"><rect x="0.500" y="2.800" width="4.500" height="3" fill="#e8e8e8"/><path d="M1.500 2.800v-1.500h3v1" fill="none" stroke="#e8e8e8" stroke-width="0.900"/></svg>
<div class="a" style="left:161.8px;top:214.7px;width:16.5px;height:9px;background:linear-gradient(#8fb0f2,#6f96e8);border:1px solid #b4c8f4;border-top-color:#9ab6f0"></div>
<div class="a" style="left:169.3px;top:216.7px;width:1.3px;height:5px;background:#152070;"></div>
<div class="t dv" style="left:3px;top:225.95px;font-size:6.9px;color:#f2f2f2;">Gem 04</div>
<div class="a" style="left:2px;top:233.35px;width:31px;height:1px;background:#1c1c1c;"></div>
<div class="a" style="left:34px;top:224.75px;width:9px;height:9px;background:#4c4c4c;border:1px solid #858585"></div>
<svg class="a" style="left:37px;top:226.75px" width="4" height="5" viewBox="0 0 4 5"><path d="M0.300 0l3.400 2.500-3.400 2.500z" fill="#fff"/></svg>
<div class="a" style="left:43.5px;top:224.75px;width:13.5px;height:9px;background:#a8ccf8;border-bottom:1px solid #999"></div>
<div class="a" style="left:57.5px;top:224.75px;width:10px;height:9px;background:#585858;border:1px solid #858585"></div>
<svg class="a" style="left:59.5px;top:226.25px" width="6" height="6" viewBox="0 0 6 6"><rect x="0.500" y="2.800" width="4.500" height="3" fill="#e8e8e8"/><path d="M1.500 2.800v-1.500h3v1" fill="none" stroke="#e8e8e8" stroke-width="0.900"/></svg>
<div class="a" style="left:68.5px;top:224.75px;width:16.5px;height:9px;background:linear-gradient(#8fb0f2,#6f96e8);border:1px solid #b4c8f4;border-top-color:#9ab6f0"></div>
<div class="a" style="left:76px;top:226.75px;width:1.3px;height:5px;background:#152070;"></div>
<div class="t dv" style="left:97px;top:225.95px;font-size:6.9px;color:#f2f2f2;">Creation</div>
<div class="a" style="left:96px;top:233.35px;width:31px;height:1px;background:#1c1c1c;"></div>
<div class="a" style="left:127.3px;top:224.75px;width:9px;height:9px;background:#4c4c4c;border:1px solid #858585"></div>
<svg class="a" style="left:130.3px;top:226.75px" width="4" height="5" viewBox="0 0 4 5"><path d="M0.300 0l3.400 2.500-3.400 2.500z" fill="#fff"/></svg>
<div class="a" style="left:136.8px;top:224.75px;width:13.5px;height:9px;background:#f8b010;border-bottom:1px solid #999"></div>
<div class="a" style="left:150.8px;top:224.75px;width:10px;height:9px;background:#585858;border:1px solid #858585"></div>
<svg class="a" style="left:152.8px;top:226.25px" width="6" height="6" viewBox="0 0 6 6"><rect x="0.500" y="2.800" width="4.500" height="3" fill="#e8e8e8"/><path d="M1.500 2.800v-1.500h3v1" fill="none" stroke="#e8e8e8" stroke-width="0.900"/></svg>
<div class="a" style="left:161.8px;top:224.75px;width:16.5px;height:9px;background:linear-gradient(#8fb0f2,#6f96e8);border:1px solid #b4c8f4;border-top-color:#9ab6f0"></div>
<div class="a" style="left:169.3px;top:226.75px;width:1.3px;height:5px;background:#152070;"></div>
<div class="a" style="left:86.3px;top:151.3px;width:3.4px;height:40px;background:linear-gradient(90deg,#6f8fe0,#9ab4f0);"></div>
<div class="a" style="left:86.3px;top:194px;width:3.4px;height:40px;background:linear-gradient(90deg,#6f8fe0,#9ab4f0);"></div>
<div class="a" style="left:180.3px;top:151.3px;width:3.4px;height:40px;background:linear-gradient(90deg,#6f8fe0,#9ab4f0);"></div>
<div class="a" style="left:180.3px;top:194px;width:3.4px;height:40px;background:linear-gradient(90deg,#6f8fe0,#9ab4f0);"></div>
<div class="a" style="left:23px;top:240.6px;width:65px;height:0.8px;background:#777;"></div>
<div class="a" style="left:99px;top:240.6px;width:65px;height:0.8px;background:#777;"></div>
<div class="a" style="left:90.500px;top:237.500px;width:7px;height:7px;border-radius:50%;background:radial-gradient(circle at 50% 35%,#eee,#777);border:0.500px solid #aaa"></div>
<div class="a" style="left:0px;top:247px;width:187px;height:16px;background:#d3d3cf;"></div>
<div class="a" style="left:16px;top:247px;width:75px;height:16px;background:linear-gradient(#e0e0dc,#cfcfcb);"></div>
<div class="a" style="left:91px;top:247px;width:96px;height:16px;background:linear-gradient(#dcdcd8,#d2d2ce);"></div>
<div class="a" style="left:91px;top:247px;width:0.8px;height:16px;background:#8a8a8a;"></div>
<div class="a" style="left:0px;top:262.3px;width:187px;height:0.9px;background:#9a9a96;"></div>
<div class="t dv" style="left:19px;top:248.1px;font-size:7.2px;font-weight:bold;color:#111">METAL WEIGHTS</div>
<svg class="a" style="left:176px;top:250.5px" width="9" height="9" viewBox="0 0 9 9"><rect x="0.400" y="0.400" width="8.200" height="8.200" fill="#dcd8d8" stroke="#b8a8a8" stroke-width="0.600"/><path d="M2 2l5 5M7 2l-5 5" stroke="#c86060" stroke-width="0.900"/></svg>
<svg class="a" style="left:0;top:247px" width="16" height="16" viewBox="0 0 16 16"><rect width="16" height="16" fill="#2f56c0"/><path d="M0 4.500h12" stroke="#dfe8fa" stroke-width="1"/><path d="M7.500 1.500l-5 9h10z" fill="none" stroke="#9cb8f0" stroke-width="0.900"/><ellipse cx="7.500" cy="11.500" rx="6" ry="2" fill="#5a82e0" stroke="#b8ccf6" stroke-width="0.700"/></svg>
<div class="a" style="left:0px;top:263px;width:187px;height:221px;background:#3b3b3b;"></div>
<div class="t dv" style="left:8px;top:270px;font-size:6.9px;color:#b2b2b2;">Library: METAL</div>
<div class="a" style="left:128.5px;top:269.2px;width:23px;height:9.500px;background:#2e2e2e;border:1px solid #6a6a6a"></div>
<div class="t dv" style="left:130.5px;top:271.0px;font-size:6.2px;color:#9a9a9a;">SV</div>
<div class="a" style="left:142.0px;top:270.2px;width:8px;height:7.500px;background:#35b4a6"></div>
<div class="a" style="left:145.4px;top:271.8px;width:1.2px;height:4.2px;background:#dff;"></div>
<div class="a" style="left:154px;top:269.2px;width:27.5px;height:9.500px;background:#2e2e2e;border:1px solid #6a6a6a"></div>
<div class="t dv" style="left:156px;top:271.0px;font-size:6.2px;color:#9a9a9a;">User</div>
<div class="a" style="left:172.0px;top:270.2px;width:8px;height:7.500px;background:#35b4a6"></div>
<div class="a" style="left:175.4px;top:271.8px;width:1.2px;height:4.2px;background:#dff;"></div>
<div class="a" style="left:4px;top:283px;width:180px;height:136px;background:#ffffff;"></div>
<div class="a" style="left:4px;top:297.5px;width:168.5px;height:121px;background:#1b1b1b;"></div>
<div class="t dv" style="left:8px;top:287px;font-size:7.2px;color:#222;">Metal</div>
<div class="t dv" style="left:101px;top:287px;font-size:7.2px;color:#444;">Grams</div>
<div class="t dv" style="left:133px;top:287px;font-size:7.2px;color:#444;">DWT</div>
<div class="a" style="left:4px;top:297.500px;width:168.500px;height:121px;overflow:hidden">
<div class="a" style="left:0;top:10.4px;width:168.500px;height:0.900px;background:#bdbdbd"></div>
<div class="t dv" style="left:3.500px;top:2.8px;font-size:7.2px;color:#f4f4f4">Yellow Gold:9KY</div>
<div class="t dv" style="left:97px;top:2.8px;font-size:7.2px;color:#f4f4f4">3.89</div>
<div class="t dv" style="left:129px;top:2.8px;font-size:7.2px;color:#f4f4f4">2.5</div>
<div class="a" style="left:0;top:21.07px;width:168.500px;height:0.900px;background:#bdbdbd"></div>
<div class="t dv" style="left:3.500px;top:13.47px;font-size:7.2px;color:#f4f4f4">Yellow Gold:10KY</div>
<div class="t dv" style="left:97px;top:13.47px;font-size:7.2px;color:#f4f4f4">4.02</div>
<div class="t dv" style="left:129px;top:13.47px;font-size:7.2px;color:#f4f4f4">2.58</div>
<div class="a" style="left:0;top:31.74px;width:168.500px;height:0.900px;background:#bdbdbd"></div>
<div class="t dv" style="left:3.500px;top:24.139999999999997px;font-size:7.2px;color:#f4f4f4">Yellow Gold:14KY</div>
<div class="t dv" style="left:97px;top:24.139999999999997px;font-size:7.2px;color:#f4f4f4">4.52</div>
<div class="t dv" style="left:129px;top:24.139999999999997px;font-size:7.2px;color:#f4f4f4">2.91</div>
<div class="a" style="left:0;top:42.41px;width:168.500px;height:0.900px;background:#bdbdbd"></div>
<div class="t dv" style="left:3.500px;top:34.809999999999995px;font-size:7.2px;color:#f4f4f4">Yellow Gold:18KY</div>
<div class="t dv" style="left:97px;top:34.809999999999995px;font-size:7.2px;color:#f4f4f4">5.41</div>
<div class="t dv" style="left:129px;top:34.809999999999995px;font-size:7.2px;color:#f4f4f4">3.48</div>
<div class="a" style="left:0;top:53.08px;width:168.500px;height:0.900px;background:#bdbdbd"></div>
<div class="t dv" style="left:3.500px;top:45.48px;font-size:7.2px;color:#f4f4f4">Yellow Gold:18KY Royal</div>
<div class="t dv" style="left:97px;top:45.48px;font-size:7.2px;color:#f4f4f4">5.41</div>
<div class="t dv" style="left:129px;top:45.48px;font-size:7.2px;color:#f4f4f4">3.48</div>
<div class="a" style="left:0;top:63.75px;width:168.500px;height:0.900px;background:#bdbdbd"></div>
<div class="t dv" style="left:3.500px;top:56.15px;font-size:7.2px;color:#f4f4f4">Yellow Gold:22KY</div>
<div class="t dv" style="left:97px;top:56.15px;font-size:7.2px;color:#f4f4f4">6.28</div>
<div class="t dv" style="left:129px;top:56.15px;font-size:7.2px;color:#f4f4f4">4.04</div>
<div class="a" style="left:0;top:74.42px;width:168.500px;height:0.900px;background:#bdbdbd"></div>
<div class="t dv" style="left:3.500px;top:66.82000000000001px;font-size:7.2px;color:#f4f4f4">White Gold:9KW</div>
<div class="t dv" style="left:97px;top:66.82000000000001px;font-size:7.2px;color:#f4f4f4">4.42</div>
<div class="t dv" style="left:129px;top:66.82000000000001px;font-size:7.2px;color:#f4f4f4">2.84</div>
<div class="a" style="left:0;top:85.09px;width:168.500px;height:0.900px;background:#bdbdbd"></div>
<div class="t dv" style="left:3.500px;top:77.49000000000001px;font-size:7.2px;color:#f4f4f4">White Gold:10KX1</div>
<div class="t dv" style="left:97px;top:77.49000000000001px;font-size:7.2px;color:#f4f4f4">3.92</div>
<div class="t dv" style="left:129px;top:77.49000000000001px;font-size:7.2px;color:#f4f4f4">2.52</div>
<div class="a" style="left:0;top:95.76px;width:168.500px;height:0.900px;background:#bdbdbd"></div>
<div class="t dv" style="left:3.500px;top:88.16000000000001px;font-size:7.2px;color:#f4f4f4">White Gold:10KW</div>
<div class="t dv" style="left:97px;top:88.16000000000001px;font-size:7.2px;color:#f4f4f4">3.86</div>
<div class="t dv" style="left:129px;top:88.16000000000001px;font-size:7.2px;color:#f4f4f4">2.48</div>
<div class="a" style="left:0;top:106.43px;width:168.500px;height:0.900px;background:#bdbdbd"></div>
<div class="t dv" style="left:3.500px;top:98.83000000000001px;font-size:7.2px;color:#f4f4f4">White Gold:14KX1</div>
<div class="t dv" style="left:97px;top:98.83000000000001px;font-size:7.2px;color:#f4f4f4">4.43</div>
<div class="t dv" style="left:129px;top:98.83000000000001px;font-size:7.2px;color:#f4f4f4">2.85</div>
<div class="a" style="left:0;top:117.10000000000001px;width:168.500px;height:0.900px;background:#bdbdbd"></div>
<div class="t dv" style="left:3.500px;top:109.50000000000001px;font-size:7.2px;color:#f4f4f4">White Gold:14K PdW</div>
<div class="t dv" style="left:97px;top:109.50000000000001px;font-size:7.2px;color:#f4f4f4">5.06</div>
<div class="t dv" style="left:129px;top:109.50000000000001px;font-size:7.2px;color:#f4f4f4">3.25</div>
<div class="a" style="left:0;top:127.77000000000001px;width:168.500px;height:0.900px;background:#bdbdbd"></div>
<div class="t dv" style="left:3.500px;top:120.17000000000002px;font-size:7.2px;color:#f4f4f4">White Gold:14KW</div>
<div class="t dv" style="left:97px;top:120.17000000000002px;font-size:7.2px;color:#f4f4f4">5.06</div>
<div class="t dv" style="left:129px;top:120.17000000000002px;font-size:7.2px;color:#f4f4f4">3.25</div>
</div>
<div class="a" style="left:97.3px;top:283px;width:0.9px;height:136px;background:#c8c8c8;"></div>
<div class="a" style="left:129px;top:283px;width:0.9px;height:136px;background:#c8c8c8;"></div>
<div class="a" style="left:166px;top:283px;width:0.9px;height:136px;background:#c8c8c8;"></div>
<div class="a" style="left:172.5px;top:283px;width:1.5px;height:136px;background:#fff;"></div>
<div class="a" style="left:174px;top:283px;width:10px;height:136px;background:#f0f0f0;"></div>
<div class="a" style="left:174.5px;top:294px;width:9px;height:17px;background:#cdcdcd;"></div>
<svg class="a" style="left:174px;top:283px" width="10" height="136" viewBox="0 0 10 136" fill="none" stroke="#444" stroke-width="1"><path d="M2.500 6.500l2.500-2.500 2.500 2.500M2.500 127.500l2.500 2.500 2.500-2.500"/></svg>
<div class="a" style="left:95.500px;top:423px;width:81px;height:10.500px;background:#3a3a3a;border:1px solid #7a7a7a"></div>
<div class="t dc" style="left:98px;top:425.8px;font-size:6.2px;color:#8a8a8a;">Use Object Materials</div>
<div class="a" style="left:167.500px;top:424.500px;width:7.500px;height:7.500px;background:#5a5a5a;border:1px solid #777"></div>
<div class="a" style="left:169.700px;top:426.700px;width:3.200px;height:3.200px;border-radius:50%;border:0.600px solid #8a8a8a"></div>
<div class="t dc" style="left:0;width:187px;top:441px;font-size:6.800px;font-weight:bold;color:#f2d43a;text-align:center;line-height:8.200px;white-space:normal">Highlight the item you want to find the weight<br>for then press Calculate.</div>
<div class="a" style="left:62px;top:466px;width:62.500px;height:10.500px;background:#353535;border:1px solid #858585"></div>
<div class="t dc" style="left:64.5px;top:469.2px;font-size:6.2px;color:#a0a0a0;">Calculate</div>
<div class="a" style="left:115px;top:467.2px;width:8px;height:8px;background:linear-gradient(#68c42c,#2f8e16);border:0.500px solid #86d050"></div>
<svg class="a" style="left:117.2px;top:468.7px" width="4" height="5" viewBox="0 0 4 5"><path d="M0.300 0l3.400 2.500-3.400 2.500z" fill="#f4ffe8"/></svg>
<div class="a" style="left:0px;top:484.3px;width:187px;height:16px;background:#d3d3cf;"></div>
<div class="a" style="left:16px;top:484.3px;width:75px;height:16px;background:linear-gradient(#e0e0dc,#cfcfcb);"></div>
<div class="a" style="left:91px;top:484.3px;width:96px;height:16px;background:linear-gradient(#dcdcd8,#d2d2ce);"></div>
<div class="a" style="left:91px;top:484.3px;width:0.8px;height:16px;background:#8a8a8a;"></div>
<div class="a" style="left:0px;top:499.6px;width:187px;height:0.9px;background:#9a9a96;"></div>
<div class="t dv" style="left:19px;top:485.40000000000003px;font-size:6.85px;font-weight:bold;color:#111">GEM REPORTER</div>
<svg class="a" style="left:176px;top:487.8px" width="9" height="9" viewBox="0 0 9 9"><rect x="0.400" y="0.400" width="8.200" height="8.200" fill="#dcd8d8" stroke="#b8a8a8" stroke-width="0.600"/><path d="M2 2l5 5M7 2l-5 5" stroke="#c86060" stroke-width="0.900"/></svg>
<svg class="a" style="left:0;top:484px" width="15" height="16" viewBox="0 0 15 16"><rect width="15" height="16" fill="#3a88b8"/><rect x="2" y="1.500" width="11" height="3" fill="#5aa8d0"/><rect x="2" y="11" width="11" height="3.500" fill="#4a98c4"/><path d="M4 8.500l2-2.500h3.500l2 2.500-3.700 3.500z" fill="#e8f4fc"/></svg>
<div class="a" style="left:0px;top:500px;width:187px;height:150px;background:#3b3b3b;"></div>
<div class="a" style="left:3.5px;top:503.2px;width:65px;height:9.2px;background:#303030;"></div>
<div class="t dv" style="left:5.5px;top:504.2px;font-size:7.3px;color:#f4f4f4;">Total Gem Weight</div>
<div class="a" style="left:73px;top:503.2px;width:20.5px;height:9.4px;background:#0a0a0a;"></div>
<div class="t" style="left:76.3px;top:503.9px;font-size:8.4px;color:#a4d8e4;transform:scaleX(.8);transform-origin:0 0">2.43</div>
<div class="a" style="left:97.5px;top:503.2px;width:64px;height:9.2px;background:#303030;"></div>
<div class="t dv" style="left:99.5px;top:504.2px;font-size:7.3px;color:#f4f4f4;">Total Gem Count</div>
<div class="a" style="left:163px;top:503.2px;width:21.5px;height:9.4px;background:#0a0a0a;"></div>
<div class="t" style="left:167.5px;top:503.9px;font-size:8.4px;color:#a4d8e4;transform:scaleX(.8);transform-origin:0 0">101</div>
<div class="a" style="left:23px;top:518.8px;width:65px;height:0.8px;background:#777;"></div>
<div class="a" style="left:99px;top:518.8px;width:65px;height:0.8px;background:#777;"></div>
<div class="a" style="left:90.500px;top:515.500px;width:7px;height:7px;border-radius:50%;background:radial-gradient(circle at 50% 35%,#eee,#777);border:0.500px solid #aaa"></div>
<div class="a" style="left:26.500px;top:525.500px;width:44px;height:9.500px;background:#343434;border:1px solid #555"></div>
<div class="t dv" style="left:28.5px;top:527px;font-size:7.2px;color:#e8e8e8;">Update</div>
<div class="a" style="left:59.5px;top:526.2px;width:9.5px;height:8.2px;background:linear-gradient(#68c42c,#2f8e16);border:0.500px solid #86d050"></div>
<svg class="a" style="left:62.45px;top:527.8000000000001px" width="4" height="5" viewBox="0 0 4 5"><path d="M0.300 0l3.400 2.500-3.400 2.500z" fill="#f4ffe8"/></svg>
<div class="a" style="left:83.500px;top:525.500px;width:78px;height:9.500px;background:#343434;border:1px solid #555"></div>
<div class="t dv" style="left:85.5px;top:527px;font-size:7.2px;color:#e8e8e8;">Save Report</div>
<div class="a" style="left:150.5px;top:526.2px;width:9.5px;height:8.2px;background:linear-gradient(#68c42c,#2f8e16);border:0.500px solid #86d050"></div>
<svg class="a" style="left:153.45px;top:527.8000000000001px" width="4" height="5" viewBox="0 0 4 5"><path d="M0.300 0l3.400 2.500-3.400 2.500z" fill="#f4ffe8"/></svg>
<div class="a" style="left:1.2px;top:537px;width:181.8px;height:113px;background:#555555;"></div>
<div class="a" style="left:1.2px;top:537px;width:181.8px;height:1px;background:#6a6a6a;"></div>
<div class="a" style="left:6.500px;top:541.5px;width:22px;height:20px;background:#2c2c2c;border:1px solid #c8c8c8"></div>
<svg class="a" style="left:7px;top:542px" width="21" height="19" viewBox="0 0 21 19"><path d="M3 13l6-10.500 8 2-5 11z" fill="#7a82e0"/><path d="M3 13l9 2.500 1.500-2-8.500-2.500z" fill="#f4f4ff"/><path d="M12 15.500l5-11-1.500 9z" fill="#d8dcf8"/></svg>
<div class="a" style="left:28.500px;top:541.5px;width:138px;height:20px;background:#303030;border:1px solid #8a8a8a"></div>
<div class="a" style="left:29px;top:551.1px;width:137px;height:0.8px;background:#8a8a8a;"></div>
<div class="a" style="left:102.5px;top:541.5px;width:0.8px;height:20px;background:#8a8a8a;"></div>
<div class="a" style="left:125.5px;top:551.5px;width:0.8px;height:10px;background:#8a8a8a;"></div>
<div class="t dv" style="left:29px;width:73px;text-align:center;top:543.1px;font-size:7.100px;color:#f0f0f0">Diamond Baguette</div>
<div class="t dv" style="left:103px;width:63px;text-align:center;top:543.1px;font-size:7.100px;color:#f0f0f0">Diamond</div>
<div class="t dv" style="left:29px;width:73px;text-align:center;top:553.1px;font-size:7.100px;color:#f0f0f0">3.00 X 1.50</div>
<div class="t dv" style="left:103px;width:22px;text-align:center;top:553.1px;font-size:7.100px;color:#f0f0f0">35</div>
<div class="t dv" style="left:126px;width:30px;text-align:center;top:553.1px;font-size:7.100px;color:#f0f0f0">1.60tw</div>
<div class="a" style="left:156px;top:552.1px;width:10px;height:8.8px;background:linear-gradient(#68c42c,#2f8e16);border:0.500px solid #86d050"></div>
<svg class="a" style="left:159.2px;top:554.0px" width="4" height="5" viewBox="0 0 4 5"><path d="M0.300 0l3.400 2.500-3.400 2.500z" fill="#f4ffe8"/></svg>
<div class="a" style="left:6.500px;top:564px;width:22px;height:20px;background:#2c2c2c;border:1px solid #c8c8c8"></div>
<svg class="a" style="left:7px;top:564.500px" width="21" height="19" viewBox="0 0 21 19"><ellipse cx="10.500" cy="9.500" rx="9" ry="6.500" fill="#6a74d0"/><ellipse cx="9.500" cy="7.500" rx="6.500" ry="3.800" fill="#8a94e8"/><path d="M5 13.500c3-2.500 9-3 13-3-1 3-4 5.500-8 5.500-2 0-4-1-5-2.500z" fill="#f4f4ff"/></svg>
<div class="a" style="left:28.500px;top:564px;width:138px;height:20px;background:#303030;border:1px solid #8a8a8a"></div>
<div class="a" style="left:29px;top:573.6px;width:137px;height:0.8px;background:#8a8a8a;"></div>
<div class="a" style="left:102.5px;top:564px;width:0.8px;height:20px;background:#8a8a8a;"></div>
<div class="a" style="left:125.5px;top:574px;width:0.8px;height:10px;background:#8a8a8a;"></div>
<div class="t dv" style="left:29px;width:73px;text-align:center;top:565.6px;font-size:7.100px;color:#f0f0f0">Diamond Round</div>
<div class="t dv" style="left:103px;width:63px;text-align:center;top:565.6px;font-size:7.100px;color:#f0f0f0">Diamond</div>
<div class="t dv" style="left:29px;width:73px;text-align:center;top:575.6px;font-size:7.100px;color:#f0f0f0">1.50 X 1.50</div>
<div class="t dv" style="left:103px;width:22px;text-align:center;top:575.6px;font-size:7.100px;color:#f0f0f0">66</div>
<div class="t dv" style="left:126px;width:30px;text-align:center;top:575.6px;font-size:7.100px;color:#f0f0f0">0.83tw</div>
<div class="a" style="left:156px;top:574.6px;width:10px;height:8.8px;background:linear-gradient(#68c42c,#2f8e16);border:0.500px solid #86d050"></div>
<svg class="a" style="left:159.2px;top:576.5px" width="4" height="5" viewBox="0 0 4 5"><path d="M0.300 0l3.400 2.500-3.400 2.500z" fill="#f4ffe8"/></svg>
<div class="a" style="left:187px;top:28px;width:1013px;height:2px;background:#f0f0f0;"></div>
<div class="a" style="left:192.5px;top:29.5px;width:1003px;height:3.5px;background:#b4c4c8;"></div>
<div class="a" style="left:1195.5px;top:28px;width:4.5px;height:622px;background:#e0e0e0;"></div>
<div class="a" style="left:1195.5px;top:28px;width:0.8px;height:622px;background:#a8a8a8;"></div>
<div class="a" style="left:192.5px;top:33px;width:1003px;height:39.5px;background:#3cb4e4;"></div>
<div class="a" style="left:192.5px;top:33px;width:3px;height:39.5px;background:#8cc8e0;"></div>
<div class="a" style="left:195.3px;top:33px;width:0.7px;height:39.5px;background:#2a7aa0;"></div>
<div class="a" style="left:196px;top:60px;width:999.5px;height:0.8px;background:#1a3a50;"></div>
<div class="a" style="left:242.3px;top:61px;width:0.8px;height:11px;background:#2a80a8;"></div>
<div class="a" style="left:1185px;top:33px;width:10.5px;height:39.5px;background:#f2f2f2;"></div>
<svg class="a" style="left:1185px;top:33px" width="10.500" height="39.500" viewBox="0 0 10.500 39.500" fill="none" stroke="#444" stroke-width="0.900"><path d="M3 7.500l2.300-2.300 2.300 2.300M3 19.500l2.300 2.300 2.300-2.300"/><path d="M4 31l1.300-1.600 1.300 1.600zM4 35l1.300 1.600 1.300-1.600z" fill="#333" stroke="none"/></svg>
<div class="a" style="left:1185px;top:60px;width:10.5px;height:0.8px;background:#444;"></div>
<div class="t" style="left:197px;top:35.5px;font-size:8.15px;color:#0e2852;">Second dimension point.</div>
<div class="t" style="left:197px;top:46.3px;font-size:8.15px;color:#0e2852;">Dimension location ( Vertical&nbsp; Horizontal ):</div>
<div class="t" style="left:197px;top:62.2px;font-size:8.05px;color:#0e2852;font-weight:bold">Command:</div>
<div class="a" style="left:192.5px;top:72.5px;width:1003px;height:16.7px;background:#b2dbea;"></div>
<div class="a" style="left:192.5px;top:88.4px;width:1003px;height:0.9px;background:#58bce4;"></div>
<svg class="a" style="left:192px;top:77px" width="50" height="12.200" viewBox="0 0 50 12.200"><path d="M0.500 12.200V5.500L5 0.600H46.500Q48.300 0.600 48.300 2.600V12.200z" fill="#eef5f7" stroke="#4a5a60" stroke-width="0.700"/></svg>
<div class="t" style="left:199.6px;top:79.5px;font-size:7.2px;color:#222;">Perspective</div>
<svg class="a" style="left:237px;top:77px" width="28" height="12.200" viewBox="0 0 28 12.200"><path d="M0.0 12.200L5.500 2.500Q6.500 0.600 8.500 0.600H24Q26 0.600 26 2.600V12.200z" fill="#eef5f7" stroke="#4a5a60" stroke-width="0.700"/></svg>
<div class="t" style="left:247px;top:79.5px;font-size:7.2px;color:#222;">Top</div>
<svg class="a" style="left:289px;top:77px" width="34" height="12.200" viewBox="0 0 34 12.200"><path d="M0.0 12.200L5.500 2.500Q6.500 0.600 8.500 0.600H30Q32 0.600 32 2.600V12.200z" fill="#eef5f7" stroke="#4a5a60" stroke-width="0.700"/></svg>
<div class="t" style="left:300px;top:79.5px;font-size:7.2px;color:#222;">Right</div>
<svg class="a" style="left:318px;top:77px" width="24" height="12.200" viewBox="0 0 24 12.200"><path d="M0.0 12.200L5.500 2.500Q6.500 0.600 8.500 0.600H20Q22 0.600 22 2.600V12.200z" fill="#eef5f7" stroke="#4a5a60" stroke-width="0.700"/></svg>
<div class="t" style="left:327px;top:79.5px;font-size:7.2px;color:#222;"></div>
<svg class="a" style="left:259px;top:77px" width="35" height="12.200" viewBox="0 0 35 12.200"><path d="M0.0 12.200L5.500 2.500Q6.500 0.600 8.500 0.600H31Q33 0.600 33 2.600V12.200z" fill="#3cb4e4" stroke="#3cb4e4" stroke-width="0.700"/></svg>
<div class="t" style="left:271.5px;top:79.5px;font-size:7.2px;color:#1a5a86;">Front</div>
<svg class="a" style="left:328px;top:79px" width="8" height="8" viewBox="0 0 8 8"><path d="M4 1v6M1 4h6" stroke="#5a7a88" stroke-width="2.200"/><path d="M4 1.800v4.400M1.800 4h4.400" stroke="#d8e8ee" stroke-width="0.700"/></svg>
<div class="a" style="left:187.5px;top:89.2px;width:5.5px;height:561px;background:#dcdcdc;"></div>
<div class="a" style="left:192.5px;top:644.7px;width:1003px;height:5.3px;background:#d4d4d4;"></div>
<div class="a" style="left:192.5px;top:644.7px;width:1003px;height:0.8px;background:#f4f4f4;"></div>
<div class="a" style="left:193px;top:89.2px;width:1002.5px;height:555.5px;background:#000;"></div>
<svg class="a" style="left:192.500px;top:89.200px" width="36" height="13" viewBox="0 0 36 13"><path d="M0 0H35V9.500L32.500 12.300H0z" fill="#3cb4e4"/><path d="M27.800 1.500v9.500" stroke="#1a6a98" stroke-width="0.600"/><path d="M29.200 5l1.900 2.800 1.900-2.800z" fill="#123"/></svg>
<div class="t" style="left:198px;top:91.6px;font-size:7.6px;color:#1a5a86;">Front</div>
<svg class="a" style="left:193px;top:89.200px" width="1002.500" height="555.500" viewBox="193 89.200 1002.500 555.500">
<defs>
<linearGradient id="pr" x1="0" y1="0" x2="1" y2="0"><stop offset="0" stop-color="#3a0d66"/><stop offset="0.150" stop-color="#6a1fa8"/><stop offset="0.400" stop-color="#b560ee"/><stop offset="0.600" stop-color="#7a28b8"/><stop offset="0.850" stop-color="#5a1896"/><stop offset="1" stop-color="#2c084c"/></linearGradient>
<radialGradient id="yg" gradientUnits="userSpaceOnUse" cx="675.500" cy="357.600" r="240"><stop offset="0.800" stop-color="#f6cf35"/><stop offset="0.860" stop-color="#fddc40"/><stop offset="0.940" stop-color="#fbd93c"/></radialGradient>
</defs>
<defs><linearGradient id="p0" x1="0" y1="0" x2="1" y2="0"><stop offset="0" stop-color="#340a5c"/><stop offset="0.35" stop-color="#651ca2"/><stop offset="0.57" stop-color="#b866f0"/><stop offset="0.65" stop-color="#b462ee"/><stop offset="0.83" stop-color="#6a20a8"/><stop offset="1" stop-color="#2c084c"/></linearGradient><linearGradient id="p1" x1="0" y1="0" x2="1" y2="0"><stop offset="0" stop-color="#340a5c"/><stop offset="0.37" stop-color="#651ca2"/><stop offset="0.59" stop-color="#b866f0"/><stop offset="0.67" stop-color="#b462ee"/><stop offset="0.85" stop-color="#6a20a8"/><stop offset="1" stop-color="#2c084c"/></linearGradient><linearGradient id="p2" x1="0" y1="0" x2="1" y2="0"><stop offset="0" stop-color="#340a5c"/><stop offset="0.39" stop-color="#651ca2"/><stop offset="0.61" stop-color="#b866f0"/><stop offset="0.69" stop-color="#b462ee"/><stop offset="0.87" stop-color="#6a20a8"/><stop offset="1" stop-color="#2c084c"/></linearGradient><linearGradient id="p3" x1="0" y1="0" x2="1" y2="0"><stop offset="0" stop-color="#340a5c"/><stop offset="0.40" stop-color="#651ca2"/><stop offset="0.62" stop-color="#b866f0"/><stop offset="0.70" stop-color="#b462ee"/><stop offset="0.88" stop-color="#6a20a8"/><stop offset="1" stop-color="#2c084c"/></linearGradient><linearGradient id="p4" x1="0" y1="0" x2="1" y2="0"><stop offset="0" stop-color="#340a5c"/><stop offset="0.40" stop-color="#651ca2"/><stop offset="0.62" stop-color="#b866f0"/><stop offset="0.70" stop-color="#b462ee"/><stop offset="0.88" stop-color="#6a20a8"/><stop offset="1" stop-color="#2c084c"/></linearGradient><linearGradient id="p5" x1="0" y1="0" x2="1" y2="0"><stop offset="0" stop-color="#340a5c"/><stop offset="0.40" stop-color="#651ca2"/><stop offset="0.62" stop-color="#b866f0"/><stop offset="0.70" stop-color="#b462ee"/><stop offset="0.88" stop-color="#6a20a8"/><stop offset="1" stop-color="#2c084c"/></linearGradient><linearGradient id="p6" x1="0" y1="0" x2="1" y2="0"><stop offset="0" stop-color="#340a5c"/><stop offset="0.39" stop-color="#651ca2"/><stop offset="0.61" stop-color="#b866f0"/><stop offset="0.69" stop-color="#b462ee"/><stop offset="0.87" stop-color="#6a20a8"/><stop offset="1" stop-color="#2c084c"/></linearGradient><linearGradient id="p7" x1="0" y1="0" x2="1" y2="0"><stop offset="0" stop-color="#340a5c"/><stop offset="0.38" stop-color="#651ca2"/><stop offset="0.60" stop-color="#b866f0"/><stop offset="0.68" stop-color="#b462ee"/><stop offset="0.86" stop-color="#6a20a8"/><stop offset="1" stop-color="#2c084c"/></linearGradient><linearGradient id="p8" x1="0" y1="0" x2="1" y2="0"><stop offset="0" stop-color="#340a5c"/><stop offset="0.36" stop-color="#651ca2"/><stop offset="0.58" stop-color="#b866f0"/><stop offset="0.66" stop-color="#b462ee"/><stop offset="0.84" stop-color="#6a20a8"/><stop offset="1" stop-color="#2c084c"/></linearGradient><linearGradient id="p9" x1="0" y1="0" x2="1" y2="0"><stop offset="0" stop-color="#340a5c"/><stop offset="0.34" stop-color="#651ca2"/><stop offset="0.56" stop-color="#b866f0"/><stop offset="0.64" stop-color="#b462ee"/><stop offset="0.82" stop-color="#6a20a8"/><stop offset="1" stop-color="#2c084c"/></linearGradient><linearGradient id="p10" x1="0" y1="0" x2="1" y2="0"><stop offset="0" stop-color="#340a5c"/><stop offset="0.31" stop-color="#651ca2"/><stop offset="0.53" stop-color="#b866f0"/><stop offset="0.61" stop-color="#b462ee"/><stop offset="0.79" stop-color="#6a20a8"/><stop offset="1" stop-color="#2c084c"/></linearGradient><linearGradient id="p11" x1="0" y1="0" x2="1" y2="0"><stop offset="0" stop-color="#340a5c"/><stop offset="0.28" stop-color="#651ca2"/><stop offset="0.50" stop-color="#b866f0"/><stop offset="0.58" stop-color="#b462ee"/><stop offset="0.76" stop-color="#6a20a8"/><stop offset="1" stop-color="#2c084c"/></linearGradient><linearGradient id="p12" x1="0" y1="0" x2="1" y2="0"><stop offset="0" stop-color="#340a5c"/><stop offset="0.25" stop-color="#651ca2"/><stop offset="0.47" stop-color="#b866f0"/><stop offset="0.55" stop-color="#b462ee"/><stop offset="0.73" stop-color="#6a20a8"/><stop offset="1" stop-color="#2c084c"/></linearGradient><linearGradient id="p13" x1="0" y1="0" x2="1" y2="0"><stop offset="0" stop-color="#340a5c"/><stop offset="0.22" stop-color="#651ca2"/><stop offset="0.44" stop-color="#b866f0"/><stop offset="0.52" stop-color="#b462ee"/><stop offset="0.70" stop-color="#6a20a8"/><stop offset="1" stop-color="#2c084c"/></linearGradient><linearGradient id="p14" x1="0" y1="0" x2="1" y2="0"><stop offset="0" stop-color="#340a5c"/><stop offset="0.19" stop-color="#651ca2"/><stop offset="0.41" stop-color="#b866f0"/><stop offset="0.49" stop-color="#b462ee"/><stop offset="0.67" stop-color="#6a20a8"/><stop offset="1" stop-color="#2c084c"/></linearGradient><linearGradient id="p15" x1="0" y1="0" x2="1" y2="0"><stop offset="0" stop-color="#340a5c"/><stop offset="0.16" stop-color="#651ca2"/><stop offset="0.38" stop-color="#b866f0"/><stop offset="0.46" stop-color="#b462ee"/><stop offset="0.64" stop-color="#6a20a8"/><stop offset="1" stop-color="#2c084c"/></linearGradient><linearGradient id="p16" x1="0" y1="0" x2="1" y2="0"><stop offset="0" stop-color="#340a5c"/><stop offset="0.14" stop-color="#651ca2"/><stop offset="0.36" stop-color="#b866f0"/><stop offset="0.44" stop-color="#b462ee"/><stop offset="0.62" stop-color="#6a20a8"/><stop offset="1" stop-color="#2c084c"/></linearGradient><linearGradient id="p17" x1="0" y1="0" x2="1" y2="0"><stop offset="0" stop-color="#340a5c"/><stop offset="0.12" stop-color="#651ca2"/><stop offset="0.34" stop-color="#b866f0"/><stop offset="0.42" stop-color="#b462ee"/><stop offset="0.60" stop-color="#6a20a8"/><stop offset="1" stop-color="#2c084c"/></linearGradient><linearGradient id="p18" x1="0" y1="0" x2="1" y2="0"><stop offset="0" stop-color="#340a5c"/><stop offset="0.10" stop-color="#651ca2"/><stop offset="0.32" stop-color="#b866f0"/><stop offset="0.40" stop-color="#b462ee"/><stop offset="0.58" stop-color="#6a20a8"/><stop offset="1" stop-color="#2c084c"/></linearGradient><linearGradient id="p19" x1="0" y1="0" x2="1" y2="0"><stop offset="0" stop-color="#340a5c"/><stop offset="0.09" stop-color="#651ca2"/><stop offset="0.31" stop-color="#b866f0"/><stop offset="0.39" stop-color="#b462ee"/><stop offset="0.57" stop-color="#6a20a8"/><stop offset="1" stop-color="#2c084c"/></linearGradient><linearGradient id="p20" x1="0" y1="0" x2="1" y2="0"><stop offset="0" stop-color="#340a5c"/><stop offset="0.08" stop-color="#651ca2"/><stop offset="0.30" stop-color="#b866f0"/><stop offset="0.38" stop-color="#b462ee"/><stop offset="0.56" stop-color="#6a20a8"/><stop offset="1" stop-color="#2c084c"/></linearGradient><linearGradient id="p21" x1="0" y1="0" x2="1" y2="0"><stop offset="0" stop-color="#340a5c"/><stop offset="0.08" stop-color="#651ca2"/><stop offset="0.30" stop-color="#b866f0"/><stop offset="0.38" stop-color="#b462ee"/><stop offset="0.56" stop-color="#6a20a8"/><stop offset="1" stop-color="#2c084c"/></linearGradient><linearGradient id="p22" x1="0" y1="0" x2="1" y2="0"><stop offset="0" stop-color="#340a5c"/><stop offset="0.09" stop-color="#651ca2"/><stop offset="0.31" stop-color="#b866f0"/><stop offset="0.39" stop-color="#b462ee"/><stop offset="0.57" stop-color="#6a20a8"/><stop offset="1" stop-color="#2c084c"/></linearGradient><linearGradient id="p23" x1="0" y1="0" x2="1" y2="0"><stop offset="0" stop-color="#340a5c"/><stop offset="0.10" stop-color="#651ca2"/><stop offset="0.32" stop-color="#b866f0"/><stop offset="0.40" stop-color="#b462ee"/><stop offset="0.58" stop-color="#6a20a8"/><stop offset="1" stop-color="#2c084c"/></linearGradient><linearGradient id="p24" x1="0" y1="0" x2="1" y2="0"><stop offset="0" stop-color="#340a5c"/><stop offset="0.11" stop-color="#651ca2"/><stop offset="0.33" stop-color="#b866f0"/><stop offset="0.41" stop-color="#b462ee"/><stop offset="0.59" stop-color="#6a20a8"/><stop offset="1" stop-color="#2c084c"/></linearGradient><linearGradient id="p25" x1="0" y1="0" x2="1" y2="0"><stop offset="0" stop-color="#340a5c"/><stop offset="0.13" stop-color="#651ca2"/><stop offset="0.35" stop-color="#b866f0"/><stop offset="0.43" stop-color="#b462ee"/><stop offset="0.61" stop-color="#6a20a8"/><stop offset="1" stop-color="#2c084c"/></linearGradient><linearGradient id="p26" x1="0" y1="0" x2="1" y2="0"><stop offset="0" stop-color="#340a5c"/><stop offset="0.16" stop-color="#651ca2"/><stop offset="0.38" stop-color="#b866f0"/><stop offset="0.46" stop-color="#b462ee"/><stop offset="0.64" stop-color="#6a20a8"/><stop offset="1" stop-color="#2c084c"/></linearGradient><linearGradient id="p27" x1="0" y1="0" x2="1" y2="0"><stop offset="0" stop-color="#340a5c"/><stop offset="0.18" stop-color="#651ca2"/><stop offset="0.40" stop-color="#b866f0"/><stop offset="0.48" stop-color="#b462ee"/><stop offset="0.66" stop-color="#6a20a8"/><stop offset="1" stop-color="#2c084c"/></linearGradient><linearGradient id="p28" x1="0" y1="0" x2="1" y2="0"><stop offset="0" stop-color="#340a5c"/><stop offset="0.21" stop-color="#651ca2"/><stop offset="0.43" stop-color="#b866f0"/><stop offset="0.51" stop-color="#b462ee"/><stop offset="0.69" stop-color="#6a20a8"/><stop offset="1" stop-color="#2c084c"/></linearGradient><linearGradient id="p29" x1="0" y1="0" x2="1" y2="0"><stop offset="0" stop-color="#340a5c"/><stop offset="0.24" stop-color="#651ca2"/><stop offset="0.46" stop-color="#b866f0"/><stop offset="0.54" stop-color="#b462ee"/><stop offset="0.72" stop-color="#6a20a8"/><stop offset="1" stop-color="#2c084c"/></linearGradient><linearGradient id="p30" x1="0" y1="0" x2="1" y2="0"><stop offset="0" stop-color="#340a5c"/><stop offset="0.27" stop-color="#651ca2"/><stop offset="0.49" stop-color="#b866f0"/><stop offset="0.57" stop-color="#b462ee"/><stop offset="0.75" stop-color="#6a20a8"/><stop offset="1" stop-color="#2c084c"/></linearGradient><linearGradient id="p31" x1="0" y1="0" x2="1" y2="0"><stop offset="0" stop-color="#340a5c"/><stop offset="0.30" stop-color="#651ca2"/><stop offset="0.52" stop-color="#b866f0"/><stop offset="0.60" stop-color="#b462ee"/><stop offset="0.78" stop-color="#6a20a8"/><stop offset="1" stop-color="#2c084c"/></linearGradient><linearGradient id="p32" x1="0" y1="0" x2="1" y2="0"><stop offset="0" stop-color="#340a5c"/><stop offset="0.33" stop-color="#651ca2"/><stop offset="0.55" stop-color="#b866f0"/><stop offset="0.63" stop-color="#b462ee"/><stop offset="0.81" stop-color="#6a20a8"/><stop offset="1" stop-color="#2c084c"/></linearGradient></defs>
<path d="M435.600 357V589.500M482.900 357V589.500M676 118.500H924M676 165H924" stroke="#d0d0d0" stroke-width="1"/>
<circle cx="675.5" cy="358.0" r="237.35" fill="none" stroke="#f3db74" stroke-width="5.300000000000011"/>
<circle cx="675.5" cy="358.0" r="230.64999999999998" fill="none" stroke="#6a9cdc" stroke-width="10.099999999999994"/>
<polyline points="675.5,130.4 682.9,123.9 689.9,130.9 697.8,124.9 704.3,132.2 712.5,126.7 718.6,134.5 727.1,129.6 732.7,137.7 741.5,133.3 746.5,141.8 755.6,137.9 760.1,146.7 769.4,143.4 773.3,152.5 782.8,149.8 786.2,159.1 795.8,157.1 798.5,166.5 808.3,165.1 810.4,174.7 820.3,173.9 821.8,183.6 831.7,183.5 832.6,193.3 842.4,193.7 842.7,203.6 852.5,204.6 852.2,214.5 861.9,216.2 860.9,226.0 870.5,228.3 868.9,238.0 878.3,240.9 876.1,250.5 885.3,254.0 882.5,263.5 891.5,267.5 888.1,276.8 896.8,281.4 892.8,290.4 901.2,295.6 896.7,304.3 904.7,310.0 899.6,318.5 907.3,324.7 901.7,332.8 909.0,339.4 902.8,347.2 909.7,354.3 903.1,361.6 909.4,369.1 902.4,376.0 908.3,384.0 900.8,390.4 906.1,398.7 898.3,404.6 903.1,413.2 894.9,418.6 899.1,427.5 890.6,432.4 894.3,441.6 885.4,445.9 888.5,455.3 879.4,459.1 881.9,468.6 872.6,471.8 874.5,481.5 865.0,484.1 866.3,493.8 856.6,495.8 857.3,505.7 847.5,507.0 847.5,516.9 837.7,517.7 837.1,527.5 827.3,527.6 826.0,537.4 816.2,536.9 814.4,546.6 804.6,545.5 802.1,555.0 792.4,553.3 789.4,562.7 779.8,560.3 776.2,569.5 766.8,566.5 762.5,575.4 753.3,571.9 748.6,580.5 739.6,576.4 734.3,584.7 725.6,580.0 719.8,588.0 711.5,582.7 705.1,590.3 697.1,584.6 690.4,591.7 682.7,585.5 675.5,592.2 668.3,585.5 660.6,591.7 653.9,584.6 645.9,590.3 639.5,582.7 631.2,588.0 625.4,580.0 616.7,584.7 611.4,576.4 602.4,580.5 597.7,571.9 588.5,575.4 584.2,566.5 574.8,569.5 571.2,560.3 561.6,562.7 558.6,553.3 548.9,555.0 546.4,545.5 536.6,546.6 534.8,536.9 525.0,537.4 523.7,527.6 513.9,527.5 513.3,517.7 503.5,516.9 503.5,507.0 493.7,505.7 494.4,495.8 484.7,493.8 486.0,484.1 476.5,481.5 478.4,471.8 469.1,468.6 471.6,459.1 462.5,455.3 465.6,445.9 456.7,441.6 460.4,432.4 451.9,427.5 456.1,418.6 447.9,413.2 452.7,404.6 444.9,398.7 450.2,390.4 442.7,384.0 448.6,376.0 441.6,369.1 447.9,361.6 441.3,354.3 448.2,347.2 442.0,339.4 449.3,332.8 443.7,324.7 451.4,318.5 446.3,310.0 454.3,304.3 449.8,295.6 458.2,290.4 454.2,281.4 462.9,276.8 459.5,267.5 468.5,263.5 465.7,254.0 474.9,250.5 472.7,240.9 482.1,238.0 480.5,228.3 490.1,226.0 489.1,216.2 498.8,214.5 498.5,204.6 508.3,203.6 508.6,193.7 518.4,193.3 519.3,183.5 529.2,183.6 530.7,173.9 540.6,174.7 542.7,165.1 552.5,166.5 555.2,157.1 564.8,159.1 568.2,149.8 577.7,152.5 581.6,143.4 590.9,146.7 595.4,137.9 604.5,141.8 609.5,133.3 618.3,137.7 623.9,129.6 632.4,134.5 638.5,126.7 646.7,132.2 653.2,124.9 661.1,130.9 668.1,123.9 675.5,130.4" fill="none" stroke="#a9cdf6" stroke-width="1.100"/>
<polyline points="675.5,123.8 682.7,130.5 690.4,124.3 697.1,131.4 705.1,125.7 711.5,133.3 719.8,128.0 725.6,136.0 734.3,131.3 739.6,139.6 748.6,135.5 753.3,144.1 762.5,140.6 766.8,149.5 776.2,146.5 779.8,155.7 789.4,153.3 792.4,162.7 802.1,161.0 804.6,170.5 814.4,169.4 816.2,179.1 826.0,178.6 827.3,188.4 837.1,188.5 837.7,198.3 847.5,199.1 847.5,209.0 857.3,210.3 856.6,220.2 866.3,222.2 865.0,231.9 874.5,234.5 872.6,244.2 881.9,247.4 879.4,256.9 888.5,260.7 885.4,270.1 894.3,274.4 890.6,283.6 899.1,288.5 894.9,297.4 903.1,302.8 898.3,311.4 906.1,317.3 900.8,325.6 908.3,332.0 902.4,340.0 909.4,346.9 903.1,354.4 909.7,361.7 902.8,368.8 909.0,376.6 901.7,383.2 907.3,391.3 899.6,397.5 904.7,406.0 896.7,411.7 901.2,420.4 892.8,425.6 896.8,434.6 888.1,439.2 891.5,448.5 882.5,452.5 885.3,462.0 876.1,465.5 878.3,475.1 868.9,478.0 870.5,487.7 860.9,490.0 861.9,499.8 852.2,501.5 852.5,511.4 842.7,512.4 842.4,522.3 832.6,522.7 831.7,532.5 821.8,532.4 820.3,542.1 810.4,541.3 808.3,550.9 798.5,549.5 795.8,558.9 786.2,556.9 782.8,566.2 773.3,563.5 769.4,572.6 760.1,569.3 755.6,578.1 746.5,574.2 741.5,582.7 732.7,578.3 727.1,586.4 718.6,581.5 712.5,589.3 704.3,583.8 697.8,591.1 689.9,585.1 682.9,592.1 675.5,585.6 668.1,592.1 661.1,585.1 653.2,591.1 646.7,583.8 638.5,589.3 632.4,581.5 623.9,586.4 618.3,578.3 609.5,582.7 604.5,574.2 595.4,578.1 590.9,569.3 581.6,572.6 577.7,563.5 568.2,566.2 564.8,556.9 555.2,558.9 552.5,549.5 542.7,550.9 540.6,541.3 530.7,542.1 529.2,532.4 519.3,532.5 518.4,522.7 508.6,522.3 508.3,512.4 498.5,511.4 498.8,501.5 489.1,499.8 490.1,490.0 480.5,487.7 482.1,478.0 472.7,475.1 474.9,465.5 465.7,462.0 468.5,452.5 459.5,448.5 462.9,439.2 454.2,434.6 458.2,425.6 449.8,420.4 454.3,411.7 446.3,406.0 451.4,397.5 443.7,391.3 449.3,383.2 442.0,376.6 448.2,368.8 441.3,361.7 447.9,354.4 441.6,346.9 448.6,340.0 442.7,332.0 450.2,325.6 444.9,317.3 452.7,311.4 447.9,302.8 456.1,297.4 451.9,288.5 460.4,283.6 456.7,274.4 465.6,270.1 462.5,260.7 471.6,256.9 469.1,247.4 478.4,244.2 476.5,234.5 486.0,231.9 484.7,222.2 494.4,220.2 493.7,210.3 503.5,209.0 503.5,199.1 513.3,198.3 513.9,188.5 523.7,188.4 525.0,178.6 534.8,179.1 536.6,169.4 546.4,170.5 548.9,161.0 558.6,162.7 561.6,153.3 571.2,155.7 574.8,146.5 584.2,149.5 588.5,140.6 597.7,144.1 602.4,135.5 611.4,139.6 616.7,131.3 625.4,136.0 631.2,128.0 639.5,133.3 645.9,125.7 653.9,131.4 660.6,124.3 668.3,130.5 675.5,123.8" fill="none" stroke="#214c98" stroke-width="1.500" opacity="0.900"/>
<circle cx="675.5" cy="358.0" r="230.64999999999998" fill="none" stroke="#a9cdf6" stroke-width="0.800"/>
<circle cx="675.5" cy="358.0" r="226.79999999999998" fill="none" stroke="#5a6a30" stroke-width="0.900" stroke-dasharray="3 1.500"/>
<path fill-rule="evenodd" fill="#fbd93c" d="M449.4 358.0a226.1 226.1 0 1 0 452.2 0a226.1 226.1 0 1 0 -452.2 0zM484.0 357.3a191.5 191.5 0 1 0 383.0 0a191.5 191.5 0 1 0 -383.0 0z"/>
<g transform="translate(675.5 357.3) rotate(180.000)"><path d="M-10 -194V-210L0 -221.500L10 -210V-194M0 -194V-221.500" fill="none" stroke="#d6b22c" stroke-width="0.800"/></g>
<g transform="translate(675.5 357.3) rotate(231.429)"><path d="M-10 -194V-210L0 -221.500L10 -210V-194M0 -194V-221.500" fill="none" stroke="#d6b22c" stroke-width="0.800"/></g>
<g transform="translate(675.5 357.3) rotate(282.857)"><path d="M-10 -194V-210L0 -221.500L10 -210V-194M0 -194V-221.500" fill="none" stroke="#d6b22c" stroke-width="0.800"/></g>
<g transform="translate(675.5 357.3) rotate(334.286)"><path d="M-10 -194V-210L0 -221.500L10 -210V-194M0 -194V-221.500" fill="none" stroke="#d6b22c" stroke-width="0.800"/></g>
<g transform="translate(675.5 357.3) rotate(385.714)"><path d="M-10 -194V-210L0 -221.500L10 -210V-194M0 -194V-221.500" fill="none" stroke="#d6b22c" stroke-width="0.800"/></g>
<g transform="translate(675.5 357.3) rotate(437.143)"><path d="M-10 -194V-210L0 -221.500L10 -210V-194M0 -194V-221.500" fill="none" stroke="#d6b22c" stroke-width="0.800"/></g>
<g transform="translate(675.5 357.3) rotate(488.571)"><path d="M-10 -194V-210L0 -221.500L10 -210V-194M0 -194V-221.500" fill="none" stroke="#d6b22c" stroke-width="0.800"/></g>
<g transform="translate(675.5 358.0) rotate(180.000)"><path d="M-7.600 -226V-239.800Q-7.400 -245.600 0 -245.900Q7.400 -245.600 7.600 -239.800V-226Q0 -224.500 -7.600 -226z" fill="url(#p0)"/></g>
<g transform="translate(675.5 358.0) rotate(190.909)"><path d="M-7.600 -226V-239.800Q-7.400 -245.600 0 -245.900Q7.400 -245.600 7.600 -239.800V-226Q0 -224.500 -7.600 -226z" fill="url(#p1)"/></g>
<g transform="translate(675.5 358.0) rotate(201.818)"><path d="M-7.600 -226V-239.800Q-7.400 -245.600 0 -245.900Q7.400 -245.600 7.600 -239.800V-226Q0 -224.500 -7.600 -226z" fill="url(#p2)"/></g>
<g transform="translate(675.5 358.0) rotate(212.727)"><path d="M-7.600 -226V-239.800Q-7.400 -245.600 0 -245.900Q7.400 -245.600 7.600 -239.800V-226Q0 -224.500 -7.600 -226z" fill="url(#p3)"/></g>
<g transform="translate(675.5 358.0) rotate(223.636)"><path d="M-7.600 -226V-239.800Q-7.400 -245.600 0 -245.900Q7.400 -245.600 7.600 -239.800V-226Q0 -224.500 -7.600 -226z" fill="url(#p4)"/></g>
<g transform="translate(675.5 358.0) rotate(234.545)"><path d="M-7.600 -226V-239.800Q-7.400 -245.600 0 -245.900Q7.400 -245.600 7.600 -239.800V-226Q0 -224.500 -7.600 -226z" fill="url(#p5)"/></g>
<g transform="translate(675.5 358.0) rotate(245.455)"><path d="M-7.600 -226V-239.800Q-7.400 -245.600 0 -245.900Q7.400 -245.600 7.600 -239.800V-226Q0 -224.500 -7.600 -226z" fill="url(#p6)"/></g>
<g transform="translate(675.5 358.0) rotate(256.364)"><path d="M-7.600 -226V-239.800Q-7.400 -245.600 0 -245.900Q7.400 -245.600 7.600 -239.800V-226Q0 -224.500 -7.600 -226z" fill="url(#p7)"/></g>
<g transform="translate(675.5 358.0) rotate(267.273)"><path d="M-7.600 -226V-239.800Q-7.400 -245.600 0 -245.900Q7.400 -245.600 7.600 -239.800V-226Q0 -224.500 -7.600 -226z" fill="url(#p8)"/></g>
<g transform="translate(675.5 358.0) rotate(278.182)"><path d="M-7.600 -226V-239.800Q-7.400 -245.600 0 -245.900Q7.400 -245.600 7.600 -239.800V-226Q0 -224.500 -7.600 -226z" fill="url(#p9)"/></g>
<g transform="translate(675.5 358.0) rotate(289.091)"><path d="M-7.600 -226V-239.800Q-7.400 -245.600 0 -245.900Q7.400 -245.600 7.600 -239.800V-226Q0 -224.500 -7.600 -226z" fill="url(#p10)"/></g>
<g transform="translate(675.5 358.0) rotate(300.000)"><path d="M-7.600 -226V-239.800Q-7.400 -245.600 0 -245.900Q7.400 -245.600 7.600 -239.800V-226Q0 -224.500 -7.600 -226z" fill="url(#p11)"/></g>
<g transform="translate(675.5 358.0) rotate(310.909)"><path d="M-7.600 -226V-239.800Q-7.400 -245.600 0 -245.900Q7.400 -245.600 7.600 -239.800V-226Q0 -224.500 -7.600 -226z" fill="url(#p12)"/></g>
<g transform="translate(675.5 358.0) rotate(321.818)"><path d="M-7.600 -226V-239.800Q-7.400 -245.600 0 -245.900Q7.400 -245.600 7.600 -239.800V-226Q0 -224.500 -7.600 -226z" fill="url(#p13)"/></g>
<g transform="translate(675.5 358.0) rotate(332.727)"><path d="M-7.600 -226V-239.800Q-7.400 -245.600 0 -245.900Q7.400 -245.600 7.600 -239.800V-226Q0 -224.500 -7.600 -226z" fill="url(#p14)"/></g>
<g transform="translate(675.5 358.0) rotate(343.636)"><path d="M-7.600 -226V-239.800Q-7.400 -245.600 0 -245.900Q7.400 -245.600 7.600 -239.800V-226Q0 -224.500 -7.600 -226z" fill="url(#p15)"/></g>
<g transform="translate(675.5 358.0) rotate(354.545)"><path d="M-7.600 -226V-239.800Q-7.400 -245.600 0 -245.900Q7.400 -245.600 7.600 -239.800V-226Q0 -224.500 -7.600 -226z" fill="url(#p16)"/></g>
<g transform="translate(675.5 358.0) rotate(365.455)"><path d="M-7.600 -226V-239.800Q-7.400 -245.600 0 -245.900Q7.400 -245.600 7.600 -239.800V-226Q0 -224.500 -7.600 -226z" fill="url(#p17)"/></g>
<g transform="translate(675.5 358.0) rotate(376.364)"><path d="M-7.600 -226V-239.800Q-7.400 -245.600 0 -245.900Q7.400 -245.600 7.600 -239.800V-226Q0 -224.500 -7.600 -226z" fill="url(#p18)"/></g>
<g transform="translate(675.5 358.0) rotate(387.273)"><path d="M-7.600 -226V-239.800Q-7.400 -245.600 0 -245.900Q7.400 -245.600 7.600 -239.800V-226Q0 -224.500 -7.600 -226z" fill="url(#p19)"/></g>
<g transform="translate(675.5 358.0) rotate(398.182)"><path d="M-7.600 -226V-239.800Q-7.400 -245.600 0 -245.900Q7.400 -245.600 7.600 -239.800V-226Q0 -224.500 -7.600 -226z" fill="url(#p20)"/></g>
<g transform="translate(675.5 358.0) rotate(409.091)"><path d="M-7.600 -226V-239.800Q-7.400 -245.600 0 -245.900Q7.400 -245.600 7.600 -239.800V-226Q0 -224.500 -7.600 -226z" fill="url(#p21)"/></g>
<g transform="translate(675.5 358.0) rotate(420.000)"><path d="M-7.600 -226V-239.800Q-7.400 -245.600 0 -245.900Q7.400 -245.600 7.600 -239.800V-226Q0 -224.500 -7.600 -226z" fill="url(#p22)"/></g>
<g transform="translate(675.5 358.0) rotate(430.909)"><path d="M-7.600 -226V-239.800Q-7.400 -245.600 0 -245.900Q7.400 -245.600 7.600 -239.800V-226Q0 -224.500 -7.600 -226z" fill="url(#p23)"/></g>
<g transform="translate(675.5 358.0) rotate(441.818)"><path d="M-7.600 -226V-239.800Q-7.400 -245.600 0 -245.900Q7.400 -245.600 7.600 -239.800V-226Q0 -224.500 -7.600 -226z" fill="url(#p24)"/></g>
<g transform="translate(675.5 358.0) rotate(452.727)"><path d="M-7.600 -226V-239.800Q-7.400 -245.600 0 -245.900Q7.400 -245.600 7.600 -239.800V-226Q0 -224.500 -7.600 -226z" fill="url(#p25)"/></g>
<g transform="translate(675.5 358.0) rotate(463.636)"><path d="M-7.600 -226V-239.800Q-7.400 -245.600 0 -245.900Q7.400 -245.600 7.600 -239.800V-226Q0 -224.500 -7.600 -226z" fill="url(#p26)"/></g>
<g transform="translate(675.5 358.0) rotate(474.545)"><path d="M-7.600 -226V-239.800Q-7.400 -245.600 0 -245.900Q7.400 -245.600 7.600 -239.800V-226Q0 -224.500 -7.600 -226z" fill="url(#p27)"/></g>
<g transform="translate(675.5 358.0) rotate(485.455)"><path d="M-7.600 -226V-239.800Q-7.400 -245.600 0 -245.900Q7.400 -245.600 7.600 -239.800V-226Q0 -224.500 -7.600 -226z" fill="url(#p28)"/></g>
<g transform="translate(675.5 358.0) rotate(496.364)"><path d="M-7.600 -226V-239.800Q-7.400 -245.600 0 -245.900Q7.400 -245.600 7.600 -239.800V-226Q0 -224.500 -7.600 -226z" fill="url(#p29)"/></g>
<g transform="translate(675.5 358.0) rotate(507.273)"><path d="M-7.600 -226V-239.800Q-7.400 -245.600 0 -245.900Q7.400 -245.600 7.600 -239.800V-226Q0 -224.500 -7.600 -226z" fill="url(#p30)"/></g>
<g transform="translate(675.5 358.0) rotate(518.182)"><path d="M-7.600 -226V-239.800Q-7.400 -245.600 0 -245.900Q7.400 -245.600 7.600 -239.800V-226Q0 -224.500 -7.600 -226z" fill="url(#p31)"/></g>
<g transform="translate(675.5 358.0) rotate(529.091)"><path d="M-7.600 -226V-239.800Q-7.400 -245.600 0 -245.900Q7.400 -245.600 7.600 -239.800V-226Q0 -224.500 -7.600 -226z" fill="url(#p32)"/></g>
<path d="M484 349H866" stroke="#d0d0d0" stroke-width="1"/>
<path d="M483.700 349l25.600-6.500v13zM866.400 349l-25.400-6.500v13z" fill="#f4f4f4"/>
<text x="632" y="343" font-size="39.500" fill="#f4f4f4" textLength="94.500" lengthAdjust="spacingAndGlyphs" font-family="Liberation Sans, sans-serif">14.48</text>
<path d="M396 576.300H436M483 576.300H522.700" stroke="#d0d0d0" stroke-width="1"/>
<path d="M435.600 576.300l-26.500-6.400v12.800zM482.900 576.300l26.500-6.400v12.800z" fill="#f4f4f4"/>
<text x="426.300" y="570.300" font-size="37.500" fill="#f4f4f4" textLength="73" lengthAdjust="spacingAndGlyphs" font-family="Liberation Sans, sans-serif">1.76</text>
<path d="M910.500 89V118M910.500 165V205.500" stroke="#d0d0d0" stroke-width="1"/>
<path d="M910.500 118.700l-6.400-27h12.800zM910.500 165l-6.400 27h12.800z" fill="#f4f4f4"/>
<text transform="translate(904.800 175.500) rotate(-90)" font-size="38.500" fill="#f4f4f4" textLength="72" lengthAdjust="spacingAndGlyphs" font-family="Liberation Sans, sans-serif">1.75</text>
<g><circle cx="1169.200" cy="115.300" r="10" fill="none" stroke="#e8a878" stroke-width="1.300"/><circle cx="1169.200" cy="115.300" r="8" fill="none" stroke="#c88860" stroke-width="0.700"/><path d="M1164.500 98.500l2-2.500h5.400l2 2.500-4.700 4.500z" fill="#3a5cd0"/><path d="M1169.200 103v3" stroke="#e8a878" stroke-width="1.200"/></g>
<path d="M215.600 603V622" stroke="#e8c890" stroke-width="1"/><path d="M215.600 622H235.500" stroke="#8a2040" stroke-width="1"/><text x="217.500" y="604" font-size="7.500" fill="#eee" font-family="Liberation Sans, sans-serif">z</text><text x="236.300" y="624" font-size="7.500" fill="#c03058" font-family="Liberation Sans, sans-serif">x</text>
</svg>
<div class="a" style="left:0px;top:650px;width:1200px;height:25px;background:#1d1d1d;"></div>
<div class="a" style="left:215px;top:650px;width:30.5px;height:25px;background:#474747;"></div>
<div class="a" style="left:215px;top:673.2px;width:30.5px;height:1.8px;background:#dedede;"></div>
<svg class="a" style="left:0;top:650px" width="260" height="25" viewBox="0 650 260 25">
<g fill="#fff"><path d="M9.800 658.400l4.600-0.700v4.300h-4.600zM15.200 657.600l5.600-0.800v5.200h-5.600zM9.800 662.800h4.600v4.300l-4.600-0.700zM15.200 662.800h5.600v5.200l-5.600-0.800z"/></g>
<circle cx="44.900" cy="662.300" r="4.400" fill="none" stroke="#fff" stroke-width="1.500"/>
<defs><linearGradient id="eg" x1="0" y1="0" x2="1" y2="1"><stop offset="0" stop-color="#35c1b0"/><stop offset="0.500" stop-color="#1b8ad6"/><stop offset="1" stop-color="#0c59a4"/></linearGradient></defs>
<circle cx="76.300" cy="662.300" r="7.800" fill="url(#eg)"/><path d="M70 664c0-4 3.500-6 6.500-6s6 2 6 5c0 2-1.500 3-3.500 3-1.500 0-2-1-1.500-2 0.500-1.500-1-2.500-2.500-2.500-2.500 0-4 2-3.500 5 0.500 2.500 3 4.500 6 4.500-4.500 1.500-7.500-2-7.500-7z" fill="#1d1d1d" opacity="0.450"/><path d="M69 660c2-4 8-5 12-2 2 1.500 2.500 3.500 2 5-0.500-3-3-5-6.500-5-3 0-6 1-7.500 2z" fill="#5fe0a0" opacity="0.800"/>
<path d="M100 657.500h5.500l1.500 1.500h8v9h-15z" fill="#f3c83c"/><rect x="100" y="660.500" width="15" height="7.500" fill="#f8d868"/><rect x="104" y="663.500" width="7" height="4.500" fill="#6aa0c8"/>
<path d="M134.500 658.500c0-3 7-3 7 0" fill="none" stroke="#e8e8e8" stroke-width="1"/><rect x="130.500" y="658.500" width="15" height="10.500" rx="1" fill="#f2f2f2"/><rect x="134.800" y="660.500" width="2.800" height="2.800" fill="#f05030"/><rect x="138.400" y="660.500" width="2.800" height="2.800" fill="#80c020"/><rect x="134.800" y="664" width="2.800" height="2.800" fill="#20a0f0"/><rect x="138.400" y="664" width="2.800" height="2.800" fill="#f8b820"/>
<path d="M161 660.500l7.500-4 7.500 4v8h-15z" fill="#1a8ad8"/><path d="M161 661l7.500 4.500 7.500-4.500v7.500h-15z" fill="#3fb4f4"/><path d="M161 660.500l7.500 4.500 7.500-4.500" fill="none" stroke="#0a5aa0" stroke-width="0.700"/>
<ellipse cx="198.500" cy="664" rx="6.500" ry="5" fill="#e8e4d8" transform="rotate(-20 198.500 664)"/><circle cx="195.500" cy="663" r="1" fill="#c04040"/><circle cx="198.500" cy="661.500" r="1" fill="#4060c0"/><circle cx="200" cy="666.500" r="1.200" fill="#1d1d1d"/><path d="M201 662l5-6" stroke="#c88848" stroke-width="1.400"/><circle cx="206" cy="656" r="1.200" fill="#e85030"/>
<circle cx="229.700" cy="662" r="8" fill="#2fb2dc"/><circle cx="229.700" cy="662" r="6.800" fill="none" stroke="#7fd4ee" stroke-width="0.600"/>
<text x="224.500" y="665.500" font-size="8" fill="#e8f8ff" font-family="Liberation Sans, sans-serif">v</text><circle cx="232" cy="660" r="1.500" fill="none" stroke="#e8f8ff" stroke-width="0.800"/><circle cx="232" cy="663.800" r="2" fill="none" stroke="#e8f8ff" stroke-width="0.800"/>
</svg>
<div class="t" style="left:845px;top:658.2px;font-size:7.4px;color:#f0f0f0;">Desktop</div>
<div class="t" style="left:877.5px;top:651.5px;font-size:9.5px;color:#f0f0f0;font-weight:bold">»</div>
<svg class="a" style="left:890px;top:650px" width="310" height="25" viewBox="890 650 310 25" fill="none" stroke="#f0f0f0" stroke-width="0.900">
<circle cx="899.500" cy="661.500" r="1.700"/><path d="M896.500 667.500c0-4 6-4 6 0"/><circle cx="904" cy="658.500" r="1.400"/><path d="M902.500 661.500c2-1 4 0 4 2"/>
<circle cx="950" cy="660.500" r="5" fill="#f08838" stroke="none"/><path d="M946 667.500h11.500c3 0 3-4 0-4-0.500-3-5-3.500-6-0.500-2-1-4 0.500-3.500 2-2.500 0-2.500 2.500-2 2.500z" fill="#e4e4e8" stroke="none"/><circle cx="957.500" cy="657" r="1.800" fill="#e83030" stroke="none"/>
<path d="M1046 664.500l3.500-3.500 3.500 3.500" stroke-width="1.100"/>
<rect x="1061.500" y="658.500" width="7.500" height="5.500"/><path d="M1063 666.500h5M1065.500 664v2.500M1059.500 657.500v6" />
<path d="M1075 660.500h2l2.500-2.500v8.500l-2.500-2.500h-2z" fill="#f0f0f0" stroke="none"/><path d="M1081 660c1 1 1 3 0 4.500M1082.800 658.500c2 2 2 5.500 0 7.500"/>
<path d="M1092 666.500c-1.500-1.500 0-4 2-3M1094 663.500l4-4M1098 658c1-1.500 3.500-0.500 3 1.500"/><circle cx="1093.500" cy="665" r="1.800"/><circle cx="1099" cy="659.500" r="1.800"/>
<rect x="1110.500" y="658.500" width="13.500" height="7.500" rx="0.800"/><path d="M1112.500 660.500h9.500M1112.500 662.300h9.500M1114 664.300h6.500" stroke-width="0.700" stroke-dasharray="1 0.700"/>
<path d="M1174 657.500h10v7.500h-3.500l-1.500 2-1.500-2h-3.500z" stroke-width="1"/>
</svg>
<div class="t" style="left:964px;top:659.6px;font-size:8.4px;color:#f0f0f0;">34°C</div>
<div class="t" style="left:988px;top:659.6px;font-size:8.4px;color:#f0f0f0;">Nắng rải rác</div>
<div class="t" style="left:1133.5px;top:653.3px;font-size:7.2px;color:#f0f0f0;">2:00 PM</div>
<div class="t" style="left:1132px;top:665px;font-size:7.2px;color:#f0f0f0;">4/3/2023</div>
</div></body></html>
